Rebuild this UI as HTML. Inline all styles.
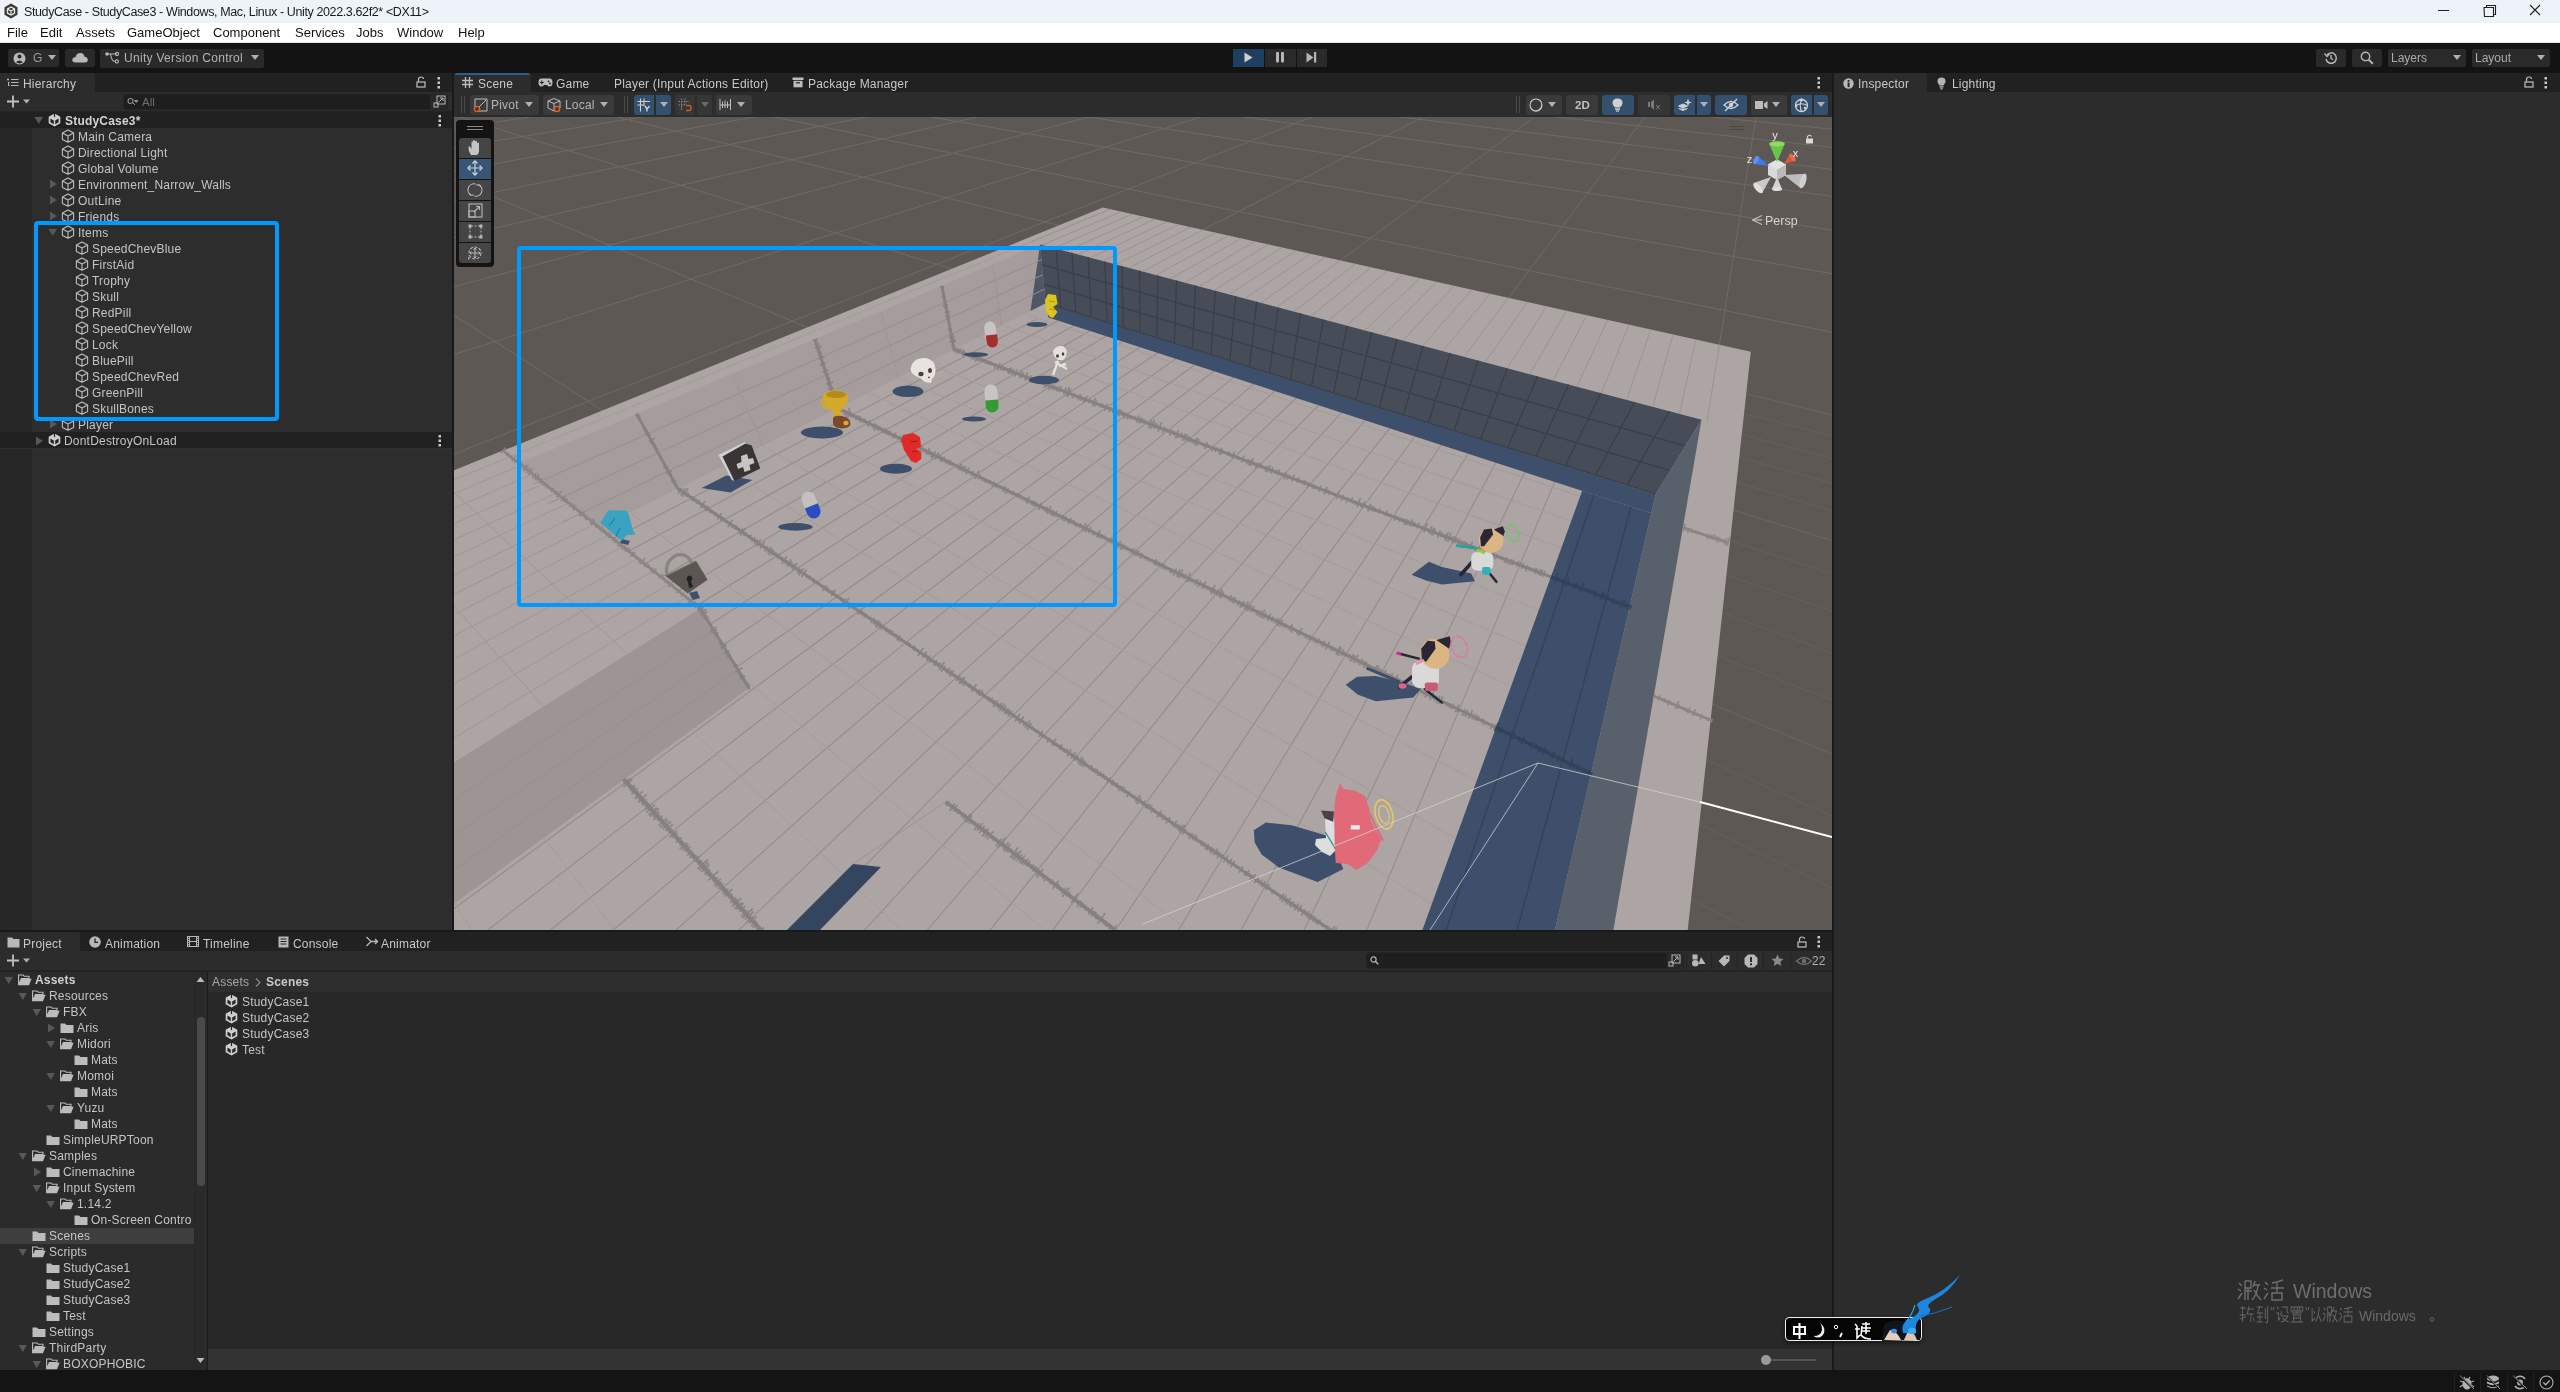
<!DOCTYPE html>
<html><head><meta charset="utf-8">
<style>
html,body{margin:0;padding:0;width:2560px;height:1392px;overflow:hidden;background:#191919;font-family:"Liberation Sans",sans-serif;}
.a{position:absolute;}
.t{position:absolute;font-size:12px;color:#c4c4c4;white-space:nowrap;line-height:16px;will-change:transform;}
svg{position:absolute;overflow:visible;}
</style></head><body>
<!-- title bar -->
<div class="a" style="left:0;top:0;width:2560px;height:23px;background:#eef2f9"></div>
<svg style="left:3px;top:3px" width="16" height="16" viewBox="0 0 16 16"><path d="M8 0.5 L14.5 4.2 V11.8 L8 15.5 L1.5 11.8 V4.2Z" fill="#3a3a3a"/><path d="M8 4 L11.5 6 V10 L8 12 L4.5 10 V6Z" fill="none" stroke="#e8e8e8" stroke-width="1.3"/><path d="M8 8 V12 M8 8 L4.5 6 M8 8 L11.5 6" stroke="#e8e8e8" stroke-width="1.1"/></svg>
<div class="t" id="title" style="left:24px;top:4px;color:#1a1a1a;font-size:12.5px;letter-spacing:-0.38px">StudyCase - StudyCase3 - Windows, Mac, Linux - Unity 2022.3.62f2* &lt;DX11&gt;</div>
<svg style="left:2436px;top:4px" width="110" height="14"><path d="M2 6.5 H13" stroke="#222" stroke-width="1"/><path d="M48 3.5 H57.5 V12.5 H48.5 Z M50.5 3.5 V1.5 H59.5 V10.5 H57.5" fill="none" stroke="#222" stroke-width="1.1"/><path d="M94 1 L104 11 M104 1 L94 11" stroke="#222" stroke-width="1.1"/></svg>
<!-- menu bar -->
<div class="a" style="left:0;top:23px;width:2560px;height:19px;background:#ffffff"></div>
<div class="a" style="left:0;top:42px;width:2560px;height:1px;background:#e6e6e6"></div>
<div class="t" style="left:7px;top:25px;color:#111;font-size:13px">File</div>
<div class="t" style="left:40px;top:25px;color:#111;font-size:13px">Edit</div>
<div class="t" style="left:76px;top:25px;color:#111;font-size:13px">Assets</div>
<div class="t" style="left:127px;top:25px;color:#111;font-size:13px">GameObject</div>
<div class="t" style="left:213px;top:25px;color:#111;font-size:13px">Component</div>
<div class="t" style="left:295px;top:25px;color:#111;font-size:13px">Services</div>
<div class="t" style="left:356px;top:25px;color:#111;font-size:13px">Jobs</div>
<div class="t" style="left:397px;top:25px;color:#111;font-size:13px">Window</div>
<div class="t" style="left:458px;top:25px;color:#111;font-size:13px">Help</div>
<!-- main toolbar -->
<div class="a" style="left:0;top:43px;width:2560px;height:30px;background:#131313"></div>
<div class="a" style="left:8px;top:49px;width:51px;height:18px;background:#2a2a2a;border-radius:2px"></div>
<svg style="left:13px;top:52px" width="13" height="13" viewBox="0 0 13 13"><circle cx="6.5" cy="6.5" r="6" fill="#b8b8b8"/><circle cx="6.5" cy="4.6" r="2" fill="#2a2a2a"/><path d="M3 10.3 Q6.5 6.8 10 10.3 Q6.5 12.6 3 10.3Z" fill="#2a2a2a"/></svg>
<div class="t" style="left:33px;top:50px;color:#9a9a9a;font-size:12px">G</div>
<svg style="left:48px;top:55px" width="8" height="6"><path d="M0 0 H8 L4 5Z" fill="#b0b0b0"/></svg>
<div class="a" style="left:65px;top:49px;width:30px;height:18px;background:#2a2a2a;border-radius:2px"></div>
<svg style="left:72px;top:52px" width="16" height="11" viewBox="0 0 16 11"><path d="M3.5 10.5 Q0 10.5 0.3 7.5 Q0.8 5 3.5 5.2 Q4.5 1 8.3 1 Q12 1.2 12.6 4.8 Q15.8 5 15.8 8 Q15.6 10.5 12.8 10.5Z" fill="#b8b8b8"/></svg>
<div class="a" style="left:100px;top:49px;width:164px;height:19px;background:#2a2a2a;border-radius:2px"></div>
<svg style="left:105px;top:52px" width="15" height="12" viewBox="0 0 15 12"><circle cx="2" cy="2" r="1.8" fill="#b8b8b8"/><path d="M2 2 H12 M5.5 2 Q6.5 9.5 10 9.5" stroke="#b8b8b8" stroke-width="1.1" fill="none"/><circle cx="12" cy="2" r="1.6" fill="none" stroke="#b8b8b8" stroke-width="1.1"/><circle cx="11.8" cy="9.5" r="1.6" fill="none" stroke="#b8b8b8" stroke-width="1.1"/></svg>
<div class="t" id="uvc" style="left:124px;top:50px;color:#b4b4b4;font-size:12px;letter-spacing:0.3px">Unity Version Control</div>
<svg style="left:251px;top:55px" width="8" height="6"><path d="M0 0 H8 L4 5Z" fill="#b0b0b0"/></svg>
<!-- play -->
<div class="a" style="left:1233px;top:49px;width:31px;height:18px;background:#1f3f61"></div>
<svg style="left:1244px;top:52px" width="9" height="11"><path d="M0.5 0.5 L8.5 5.5 L0.5 10.5Z" fill="#cfcfcf"/></svg>
<div class="a" style="left:1265px;top:49px;width:31px;height:18px;background:#2a2a2a"></div>
<svg style="left:1276px;top:52px" width="9" height="11"><rect x="0" y="0" width="3" height="10.5" rx="1" fill="#b5b5b5"/><rect x="5" y="0" width="3" height="10.5" rx="1" fill="#b5b5b5"/></svg>
<div class="a" style="left:1297px;top:49px;width:30px;height:18px;background:#2a2a2a"></div>
<svg style="left:1306px;top:52px" width="12" height="11"><path d="M0.5 0.5 L7.5 5.5 L0.5 10.5Z" fill="#b5b5b5"/><rect x="8" y="0" width="2.2" height="10.5" fill="#b5b5b5"/></svg>
<!-- right toolbar -->
<div class="a" style="left:2316px;top:49px;width:30px;height:18px;background:#2a2a2a;border-radius:2px"></div>
<svg style="left:2324px;top:51px" width="14" height="14" viewBox="0 0 14 14"><path d="M2.6 4.5 A5.2 5.2 0 1 1 2 8" fill="none" stroke="#b5b5b5" stroke-width="1.5"/><path d="M0.5 2.5 L3 5.5 L5.5 3" fill="none" stroke="#b5b5b5" stroke-width="1.3"/><path d="M7 4 V7.2 L9 8.8" fill="none" stroke="#b5b5b5" stroke-width="1.4"/></svg>
<div class="a" style="left:2352px;top:49px;width:30px;height:18px;background:#2a2a2a;border-radius:2px"></div>
<svg style="left:2360px;top:51px" width="14" height="14" viewBox="0 0 14 14"><circle cx="5.5" cy="5.5" r="4.2" fill="none" stroke="#b5b5b5" stroke-width="1.4"/><path d="M8.6 8.6 L12.8 12.8" stroke="#b5b5b5" stroke-width="2"/></svg>
<div class="a" style="left:2388px;top:49px;width:78px;height:18px;background:#2a2a2a;border-radius:2px"></div>
<div class="t" style="left:2391px;top:50px;color:#aaaaaa;font-size:12px">Layers</div>
<svg style="left:2453px;top:55px" width="8" height="6"><path d="M0 0 H8 L4 5Z" fill="#b0b0b0"/></svg>
<div class="a" style="left:2472px;top:49px;width:78px;height:18px;background:#2a2a2a;border-radius:2px"></div>
<div class="t" style="left:2475px;top:50px;color:#aaaaaa;font-size:12px">Layout</div>
<svg style="left:2537px;top:55px" width="8" height="6"><path d="M0 0 H8 L4 5Z" fill="#b0b0b0"/></svg>
<!-- status bar -->
<div class="a" style="left:0;top:1370px;width:2560px;height:22px;background:#181818"></div>
<div class="a" style="left:0;top:73px;width:452px;height:857px;background:#2d2d2d"></div>
<div class="a" style="left:0;top:73px;width:452px;height:19px;background:#212121;border-radius:3px 3px 0 0"></div>
<div class="a" style="left:0;top:73px;width:95px;height:19px;background:#2c2c2c;border-radius:3px 3px 0 0"></div>
<svg style="left:7px;top:77px" width="12" height="11" viewBox="0 0 12 11"><path d="M1 1.5 V3.5 M0 2.5 H2 M4 2.5 H11.5 M4 5.5 H11.5 M4 8.5 H11.5 M1.5 5 V9 M1 5.5 H2.5 M1 8.5 H2.5" stroke="#b8b8b8" stroke-width="1"/></svg>
<div class="t" style="left:23px;top:76px;color:#c8c8c8;letter-spacing:0.2px">Hierarchy</div>
<svg style="left:416px;top:76px" width="10" height="12" viewBox="0 0 10 12"><path d="M2.5 5.5 V3.5 Q2.5 1 5 1 Q7.5 1 7.5 3" fill="none" stroke="#c0c0c0" stroke-width="1.2"/><rect x="1" y="6" width="8" height="5" fill="none" stroke="#c0c0c0" stroke-width="1.2"/></svg>
<svg style="left:437px;top:77px" width="4" height="12"><rect x="0.5" y="0" width="2.5" height="2.5" fill="#c8c8c8"/><rect x="0.5" y="4.5" width="2.5" height="2.5" fill="#c8c8c8"/><rect x="0.5" y="9" width="2.5" height="2.5" fill="#c8c8c8"/></svg>
<div class="a" style="left:0;top:92px;width:452px;height:20px;background:#2c2c2c"></div>
<div class="a" style="left:0;top:111px;width:452px;height:1px;background:#232323"></div>
<svg style="left:7px;top:95px" width="24" height="13" viewBox="0 0 24 13"><path d="M6 0.5 V12.5 M0 6.5 H12" stroke="#c0c0c0" stroke-width="1.8"/><path d="M16 4.5 H23 L19.5 8.5Z" fill="#b0b0b0"/></svg>
<div class="a" style="left:123px;top:94px;width:325px;height:16px;background:#1e1e1e;border-radius:4px;border:1px solid #242424;box-sizing:border-box"></div>
<div class="a" style="left:430px;top:95px;width:17px;height:14px;background:#292929;border-radius:0 3px 3px 0"></div>
<svg style="left:127px;top:97px" width="12" height="10" viewBox="0 0 12 10"><circle cx="3.5" cy="4" r="2.5" fill="none" stroke="#909090" stroke-width="1.1"/><path d="M5.5 5.5 L8 8 M7.5 3.5 H11 L9.2 5.5Z" stroke="#909090" stroke-width="1" fill="#909090"/></svg>
<div class="t" style="left:142px;top:94px;color:#6e6e6e;font-size:11.5px">All</div>
<svg style="left:433px;top:95px" width="13" height="13" viewBox="0 0 13 13"><rect x="4" y="1" width="8" height="8" fill="none" stroke="#b8b8b8" stroke-width="1"/><rect x="1" y="8" width="4" height="4" fill="none" stroke="#b8b8b8" stroke-width="1"/><path d="M5.5 7.5 L10 3 M7 3 H10 V6" fill="none" stroke="#b8b8b8" stroke-width="1"/></svg>
<div class="a" style="left:0;top:128px;width:32px;height:802px;background:#272727"></div>
<div class="a" style="left:0;top:112px;width:452px;height:16px;background:#212121"></div>
<div class="a" style="left:0;top:432px;width:452px;height:16px;background:#212121"></div>
<div class="a" style="left:0;top:448px;width:452px;height:1px;background:#303030"></div>
<svg style="left:34px;top:116px" width="10" height="9"><path d="M0.5 1 H9 L4.75 8Z" fill="#585858"/></svg>
<svg style="left:48px;top:113px" width="13" height="14" viewBox="0 0 13 14"><path d="M6.5 0.5 L12.3 3.8 V10.2 L6.5 13.5 L0.7 10.2 V3.8Z" fill="#cfcfcf"/><path d="M2.4 5.6 L5.8 7.5 V11.2 L2.4 9.3Z M10.6 5.6 L7.2 7.5 V11.2 L10.6 9.3Z" fill="#212121"/><rect x="5.9" y="0" width="1.2" height="4.2" fill="#212121"/><path d="M6.5 7.2 L9.5 5.9 V8.8 L6.5 10.5Z" fill="#cfcfcf" opacity="0"/></svg>
<div class="t" style="left:65px;top:113px;color:#d2d2d2;font-weight:bold;letter-spacing:0.2px">StudyCase3*</div>
<svg style="left:438px;top:115px" width="4" height="12"><rect x="0.5" y="0" width="2.5" height="2.5" fill="#c8c8c8"/><rect x="0.5" y="4.5" width="2.5" height="2.5" fill="#c8c8c8"/><rect x="0.5" y="9" width="2.5" height="2.5" fill="#c8c8c8"/></svg>
<svg style="left:61px;top:129px" width="14" height="14" viewBox="0 0 14 14"><path d="M7 1 L12.6 4 V10.4 L7 13.3 L1.4 10.4 V4Z M1.4 4 L7 7 L12.6 4 M7 7 V13.3" fill="none" stroke="#bdbdbd" stroke-width="1.1" stroke-linejoin="round"/></svg>
<div class="t" style="left:78px;top:129px;color:#c4c4c4;letter-spacing:0.2px">Main Camera</div>
<svg style="left:61px;top:145px" width="14" height="14" viewBox="0 0 14 14"><path d="M7 1 L12.6 4 V10.4 L7 13.3 L1.4 10.4 V4Z M1.4 4 L7 7 L12.6 4 M7 7 V13.3" fill="none" stroke="#bdbdbd" stroke-width="1.1" stroke-linejoin="round"/></svg>
<div class="t" style="left:78px;top:145px;color:#c4c4c4;letter-spacing:0.2px">Directional Light</div>
<svg style="left:61px;top:161px" width="14" height="14" viewBox="0 0 14 14"><path d="M7 1 L12.6 4 V10.4 L7 13.3 L1.4 10.4 V4Z M1.4 4 L7 7 L12.6 4 M7 7 V13.3" fill="none" stroke="#bdbdbd" stroke-width="1.1" stroke-linejoin="round"/></svg>
<div class="t" style="left:78px;top:161px;color:#c4c4c4;letter-spacing:0.2px">Global Volume</div>
<svg style="left:49px;top:179px" width="9" height="10"><path d="M1 0.5 V9.5 L8 5Z" fill="#585858"/></svg>
<svg style="left:61px;top:177px" width="14" height="14" viewBox="0 0 14 14"><path d="M7 1 L12.6 4 V10.4 L7 13.3 L1.4 10.4 V4Z M1.4 4 L7 7 L12.6 4 M7 7 V13.3" fill="none" stroke="#bdbdbd" stroke-width="1.1" stroke-linejoin="round"/></svg>
<div class="t" style="left:78px;top:177px;color:#c4c4c4;letter-spacing:0.2px">Environment_Narrow_Walls</div>
<svg style="left:49px;top:195px" width="9" height="10"><path d="M1 0.5 V9.5 L8 5Z" fill="#585858"/></svg>
<svg style="left:61px;top:193px" width="14" height="14" viewBox="0 0 14 14"><path d="M7 1 L12.6 4 V10.4 L7 13.3 L1.4 10.4 V4Z M1.4 4 L7 7 L12.6 4 M7 7 V13.3" fill="none" stroke="#bdbdbd" stroke-width="1.1" stroke-linejoin="round"/></svg>
<div class="t" style="left:78px;top:193px;color:#c4c4c4;letter-spacing:0.2px">OutLine</div>
<svg style="left:49px;top:211px" width="9" height="10"><path d="M1 0.5 V9.5 L8 5Z" fill="#585858"/></svg>
<svg style="left:61px;top:209px" width="14" height="14" viewBox="0 0 14 14"><path d="M7 1 L12.6 4 V10.4 L7 13.3 L1.4 10.4 V4Z M1.4 4 L7 7 L12.6 4 M7 7 V13.3" fill="none" stroke="#bdbdbd" stroke-width="1.1" stroke-linejoin="round"/></svg>
<div class="t" style="left:78px;top:209px;color:#c4c4c4;letter-spacing:0.2px">Friends</div>
<svg style="left:48px;top:228px" width="10" height="9"><path d="M0.5 1 H9 L4.75 8Z" fill="#585858"/></svg>
<svg style="left:61px;top:225px" width="14" height="14" viewBox="0 0 14 14"><path d="M7 1 L12.6 4 V10.4 L7 13.3 L1.4 10.4 V4Z M1.4 4 L7 7 L12.6 4 M7 7 V13.3" fill="none" stroke="#bdbdbd" stroke-width="1.1" stroke-linejoin="round"/></svg>
<div class="t" style="left:78px;top:225px;color:#c4c4c4;letter-spacing:0.2px">Items</div>
<svg style="left:75px;top:241px" width="14" height="14" viewBox="0 0 14 14"><path d="M7 1 L12.6 4 V10.4 L7 13.3 L1.4 10.4 V4Z M1.4 4 L7 7 L12.6 4 M7 7 V13.3" fill="none" stroke="#bdbdbd" stroke-width="1.1" stroke-linejoin="round"/></svg>
<div class="t" style="left:92px;top:241px;color:#c4c4c4;letter-spacing:0.2px">SpeedChevBlue</div>
<svg style="left:75px;top:257px" width="14" height="14" viewBox="0 0 14 14"><path d="M7 1 L12.6 4 V10.4 L7 13.3 L1.4 10.4 V4Z M1.4 4 L7 7 L12.6 4 M7 7 V13.3" fill="none" stroke="#bdbdbd" stroke-width="1.1" stroke-linejoin="round"/></svg>
<div class="t" style="left:92px;top:257px;color:#c4c4c4;letter-spacing:0.2px">FirstAid</div>
<svg style="left:75px;top:273px" width="14" height="14" viewBox="0 0 14 14"><path d="M7 1 L12.6 4 V10.4 L7 13.3 L1.4 10.4 V4Z M1.4 4 L7 7 L12.6 4 M7 7 V13.3" fill="none" stroke="#bdbdbd" stroke-width="1.1" stroke-linejoin="round"/></svg>
<div class="t" style="left:92px;top:273px;color:#c4c4c4;letter-spacing:0.2px">Trophy</div>
<svg style="left:75px;top:289px" width="14" height="14" viewBox="0 0 14 14"><path d="M7 1 L12.6 4 V10.4 L7 13.3 L1.4 10.4 V4Z M1.4 4 L7 7 L12.6 4 M7 7 V13.3" fill="none" stroke="#bdbdbd" stroke-width="1.1" stroke-linejoin="round"/></svg>
<div class="t" style="left:92px;top:289px;color:#c4c4c4;letter-spacing:0.2px">Skull</div>
<svg style="left:75px;top:305px" width="14" height="14" viewBox="0 0 14 14"><path d="M7 1 L12.6 4 V10.4 L7 13.3 L1.4 10.4 V4Z M1.4 4 L7 7 L12.6 4 M7 7 V13.3" fill="none" stroke="#bdbdbd" stroke-width="1.1" stroke-linejoin="round"/></svg>
<div class="t" style="left:92px;top:305px;color:#c4c4c4;letter-spacing:0.2px">RedPill</div>
<svg style="left:75px;top:321px" width="14" height="14" viewBox="0 0 14 14"><path d="M7 1 L12.6 4 V10.4 L7 13.3 L1.4 10.4 V4Z M1.4 4 L7 7 L12.6 4 M7 7 V13.3" fill="none" stroke="#bdbdbd" stroke-width="1.1" stroke-linejoin="round"/></svg>
<div class="t" style="left:92px;top:321px;color:#c4c4c4;letter-spacing:0.2px">SpeedChevYellow</div>
<svg style="left:75px;top:337px" width="14" height="14" viewBox="0 0 14 14"><path d="M7 1 L12.6 4 V10.4 L7 13.3 L1.4 10.4 V4Z M1.4 4 L7 7 L12.6 4 M7 7 V13.3" fill="none" stroke="#bdbdbd" stroke-width="1.1" stroke-linejoin="round"/></svg>
<div class="t" style="left:92px;top:337px;color:#c4c4c4;letter-spacing:0.2px">Lock</div>
<svg style="left:75px;top:353px" width="14" height="14" viewBox="0 0 14 14"><path d="M7 1 L12.6 4 V10.4 L7 13.3 L1.4 10.4 V4Z M1.4 4 L7 7 L12.6 4 M7 7 V13.3" fill="none" stroke="#bdbdbd" stroke-width="1.1" stroke-linejoin="round"/></svg>
<div class="t" style="left:92px;top:353px;color:#c4c4c4;letter-spacing:0.2px">BluePill</div>
<svg style="left:75px;top:369px" width="14" height="14" viewBox="0 0 14 14"><path d="M7 1 L12.6 4 V10.4 L7 13.3 L1.4 10.4 V4Z M1.4 4 L7 7 L12.6 4 M7 7 V13.3" fill="none" stroke="#bdbdbd" stroke-width="1.1" stroke-linejoin="round"/></svg>
<div class="t" style="left:92px;top:369px;color:#c4c4c4;letter-spacing:0.2px">SpeedChevRed</div>
<svg style="left:75px;top:385px" width="14" height="14" viewBox="0 0 14 14"><path d="M7 1 L12.6 4 V10.4 L7 13.3 L1.4 10.4 V4Z M1.4 4 L7 7 L12.6 4 M7 7 V13.3" fill="none" stroke="#bdbdbd" stroke-width="1.1" stroke-linejoin="round"/></svg>
<div class="t" style="left:92px;top:385px;color:#c4c4c4;letter-spacing:0.2px">GreenPill</div>
<svg style="left:75px;top:401px" width="14" height="14" viewBox="0 0 14 14"><path d="M7 1 L12.6 4 V10.4 L7 13.3 L1.4 10.4 V4Z M1.4 4 L7 7 L12.6 4 M7 7 V13.3" fill="none" stroke="#bdbdbd" stroke-width="1.1" stroke-linejoin="round"/></svg>
<div class="t" style="left:92px;top:401px;color:#c4c4c4;letter-spacing:0.2px">SkullBones</div>
<svg style="left:49px;top:419px" width="9" height="10"><path d="M1 0.5 V9.5 L8 5Z" fill="#585858"/></svg>
<svg style="left:61px;top:417px" width="14" height="14" viewBox="0 0 14 14"><path d="M7 1 L12.6 4 V10.4 L7 13.3 L1.4 10.4 V4Z M1.4 4 L7 7 L12.6 4 M7 7 V13.3" fill="none" stroke="#bdbdbd" stroke-width="1.1" stroke-linejoin="round"/></svg>
<div class="t" style="left:78px;top:417px;color:#c4c4c4;letter-spacing:0.2px">Player</div>
<svg style="left:35px;top:436px" width="9" height="10"><path d="M1 0.5 V9.5 L8 5Z" fill="#585858"/></svg>
<svg style="left:48px;top:433px" width="13" height="14" viewBox="0 0 13 14"><path d="M6.5 0.5 L12.3 3.8 V10.2 L6.5 13.5 L0.7 10.2 V3.8Z" fill="#cfcfcf"/><path d="M2.4 5.6 L5.8 7.5 V11.2 L2.4 9.3Z M10.6 5.6 L7.2 7.5 V11.2 L10.6 9.3Z" fill="#212121"/><rect x="5.9" y="0" width="1.2" height="4.2" fill="#212121"/><path d="M6.5 7.2 L9.5 5.9 V8.8 L6.5 10.5Z" fill="#cfcfcf" opacity="0"/></svg>
<div class="t" style="left:64px;top:433px;color:#c4c4c4;letter-spacing:0.2px">DontDestroyOnLoad</div>
<svg style="left:438px;top:435px" width="4" height="12"><rect x="0.5" y="0" width="2.5" height="2.5" fill="#c8c8c8"/><rect x="0.5" y="4.5" width="2.5" height="2.5" fill="#c8c8c8"/><rect x="0.5" y="9" width="2.5" height="2.5" fill="#c8c8c8"/></svg>
<div class="a" style="left:34px;top:221px;width:245px;height:200px;border:4px solid #0099ff;border-radius:4px;box-sizing:border-box"></div>
<div class="a" style="left:454px;top:73px;width:1378px;height:857px;background:#2a2a2a"></div>
<div class="a" style="left:454px;top:73px;width:1378px;height:19px;background:#212121;border-radius:3px 3px 0 0"></div>
<div class="a" style="left:454px;top:73px;width:77px;height:19px;background:#2c2c2c;border-radius:3px 3px 0 0"></div>
<div class="a" style="left:455px;top:73px;width:75px;height:2px;background:#2c5d8f;border-radius:2px 2px 0 0"></div>
<svg style="left:462px;top:77px" width="11" height="11" viewBox="0 0 11 11"><path d="M3.5 0 V11 M7.5 0 V11 M0 3.5 H11 M0 7.5 H11" stroke="#bdbdbd" stroke-width="1.3"/></svg>
<div class="t" style="left:478px;top:76px;color:#c8c8c8;letter-spacing:0.2px">Scene</div>
<svg style="left:538px;top:78px" width="15" height="9" viewBox="0 0 15 9"><path d="M3.5 0.5 H11.5 Q14.5 0.5 14.5 4.5 Q14.5 8.5 11.5 8.5 Q10 8.5 9 7 H6 Q5 8.5 3.5 8.5 Q0.5 8.5 0.5 4.5 Q0.5 0.5 3.5 0.5Z" fill="#bdbdbd"/><path d="M3.8 2.6 V6.4 M1.9 4.5 H5.7" stroke="#212121" stroke-width="1.1"/><circle cx="10.5" cy="3.3" r="0.9" fill="#212121"/><circle cx="12" cy="5.5" r="0.9" fill="#212121"/></svg>
<div class="t" style="left:556px;top:76px;color:#c8c8c8;letter-spacing:0.2px">Game</div>
<div class="t" style="left:614px;top:76px;color:#c8c8c8;letter-spacing:0.2px">Player (Input Actions Editor)</div>
<svg style="left:792px;top:77px" width="12" height="11" viewBox="0 0 12 11"><rect x="0.5" y="0.5" width="11" height="2.5" fill="#bdbdbd"/><rect x="1.5" y="3.8" width="9" height="6.5" fill="#bdbdbd"/><rect x="4" y="5.2" width="4" height="1.2" fill="#212121"/></svg>
<div class="t" style="left:808px;top:76px;color:#c8c8c8;letter-spacing:0.2px">Package Manager</div>
<svg style="left:1817px;top:77px" width="4" height="12"><rect x="0.5" y="0" width="2.5" height="2.5" fill="#c8c8c8"/><rect x="0.5" y="4.5" width="2.5" height="2.5" fill="#c8c8c8"/><rect x="0.5" y="9" width="2.5" height="2.5" fill="#c8c8c8"/></svg>
<!-- scene toolbar -->
<div class="a" style="left:454px;top:92px;width:1378px;height:25px;background:#2c2c2c"></div>
<div class="a" style="left:461px;top:96px;width:1px;height:17px;background:#4a4a4a"></div>
<div class="a" style="left:464px;top:96px;width:1px;height:17px;background:#4a4a4a"></div>
<div class="a" style="left:470px;top:95px;width:69px;height:20px;background:#3a3a3a;border-radius:3px"></div>
<svg style="left:473px;top:97px" width="16" height="16" viewBox="0 0 16 16"><path d="M2 2 H14 V14 H5 M2 2 V10" fill="none" stroke="#bdbdbd" stroke-width="1"/><path d="M6 10 L13 3" stroke="#bdbdbd" stroke-width="1"/><circle cx="4" cy="12" r="2.6" fill="none" stroke="#e8602c" stroke-width="1.3"/></svg>
<div class="t" style="left:491px;top:97px;color:#b4b4b4;letter-spacing:0.2px">Pivot</div>
<svg style="left:525px;top:102px" width="8" height="6"><path d="M0 0 H8 L4 5Z" fill="#b0b0b0"/></svg>
<div class="a" style="left:543px;top:95px;width:71px;height:20px;background:#3a3a3a;border-radius:3px"></div>
<svg style="left:546px;top:97px" width="16" height="16" viewBox="0 0 16 16"><path d="M8 1.5 L14 4 V11 L8 14 L2 11 V4Z M2 4 L8 6.5 L14 4 M8 6.5 V14" fill="none" stroke="#bdbdbd" stroke-width="1"/><circle cx="11" cy="12" r="2.6" fill="#3a3a3a" stroke="#e8602c" stroke-width="1.3"/></svg>
<div class="t" style="left:565px;top:97px;color:#b4b4b4;letter-spacing:0.2px">Local</div>
<svg style="left:600px;top:102px" width="8" height="6"><path d="M0 0 H8 L4 5Z" fill="#b0b0b0"/></svg>
<div class="a" style="left:624px;top:96px;width:1px;height:17px;background:#4a4a4a"></div>
<div class="a" style="left:627px;top:96px;width:1px;height:17px;background:#4a4a4a"></div>
<div class="a" style="left:634px;top:95px;width:20px;height:20px;background:#34506f;border-radius:3px 0 0 3px"></div>
<div class="a" style="left:656px;top:95px;width:15px;height:20px;background:#34506f;border-radius:0 3px 3px 0"></div>
<svg style="left:637px;top:98px" width="14" height="14" viewBox="0 0 14 14"><path d="M3.5 0.5 V13.5 M7 0.5 V8 M0.5 3.5 H13 M0.5 7 H7" stroke="#d0d0d0" stroke-width="1.1"/><path d="M8 8 L10 11 L12.5 8 M10 11 V13.5" fill="none" stroke="#d0d0d0" stroke-width="1.4"/></svg>
<svg style="left:660px;top:102px" width="8" height="6"><path d="M0 0 H8 L4 5Z" fill="#b0b0b0"/></svg>
<div class="a" style="left:675px;top:95px;width:20px;height:20px;background:#363636;border-radius:3px 0 0 3px"></div>
<div class="a" style="left:697px;top:95px;width:15px;height:20px;background:#363636;border-radius:0 3px 3px 0"></div>
<svg style="left:678px;top:98px" width="14" height="14" viewBox="0 0 14 14"><path d="M3.5 0.5 V13 M7 0.5 V7 M0.5 3.5 H11 M0.5 7 H7" stroke="#8a8a8a" stroke-width="1" stroke-dasharray="1.5 1"/><path d="M8 7.5 H11 Q13 7.5 13 10 Q13 12.5 11 12.5 H8" fill="none" stroke="#d0582a" stroke-width="1.4"/></svg>
<svg style="left:701px;top:102px" width="8" height="6"><path d="M0 0 H8 L4 5Z" fill="#6a6a6a"/></svg>
<div class="a" style="left:716px;top:95px;width:36px;height:20px;background:#3a3a3a;border-radius:3px"></div>
<svg style="left:719px;top:98px" width="13" height="13" viewBox="0 0 13 13"><path d="M1 1 V12 M11.5 1 V12 M1 7 H11.5 M3.5 3.5 V10 M6 2.5 V10 M8.5 3.5 V10" stroke="#c0c0c0" stroke-width="1"/></svg>
<svg style="left:737px;top:102px" width="8" height="6"><path d="M0 0 H8 L4 5Z" fill="#b0b0b0"/></svg>
<!-- right side of scene toolbar -->
<div class="a" style="left:1516px;top:96px;width:1px;height:17px;background:#4a4a4a"></div>
<div class="a" style="left:1519px;top:96px;width:1px;height:17px;background:#4a4a4a"></div>
<div class="a" style="left:1526px;top:95px;width:36px;height:20px;background:#3a3a3a;border-radius:3px"></div>
<svg style="left:1529px;top:98px" width="14" height="14" viewBox="0 0 14 14"><circle cx="7" cy="7" r="6" fill="none" stroke="#c8c8c8" stroke-width="1.1"/><path d="M12.5 5 A6 6 0 0 1 4 12.5 A7 7 0 0 0 12.5 5Z" fill="#c8c8c8"/></svg>
<svg style="left:1548px;top:102px" width="8" height="6"><path d="M0 0 H8 L4 5Z" fill="#b0b0b0"/></svg>
<div class="a" style="left:1566px;top:95px;width:32px;height:20px;background:#3a3a3a;border-radius:3px"></div>
<div class="t" style="left:1575px;top:97px;color:#c0c0c0;font-weight:bold;font-size:11.5px">2D</div>
<div class="a" style="left:1602px;top:95px;width:32px;height:20px;background:#34506f;border-radius:3px"></div>
<svg style="left:1612px;top:98px" width="11" height="14" viewBox="0 0 11 14"><path d="M5.5 0.5 Q10.5 0.5 10.5 5 Q10.5 7.5 8 9.5 H3 Q0.5 7.5 0.5 5 Q0.5 0.5 5.5 0.5Z" fill="#d0d0d0"/><rect x="3" y="10.3" width="5" height="1.5" fill="#d0d0d0"/><rect x="4" y="12.3" width="3" height="1.3" fill="#d0d0d0"/></svg>
<div class="a" style="left:1638px;top:95px;width:32px;height:20px;background:#363636;border-radius:3px"></div>
<svg style="left:1648px;top:99px" width="13" height="12" viewBox="0 0 13 12"><rect x="0" y="3" width="2" height="5" fill="#7a7a7a"/><path d="M3 3 L6 0.5 V11 L3 8Z" fill="#7a7a7a"/><path d="M8 6 L12 10.5 M12 6 L8 10.5" stroke="#7a7a7a" stroke-width="1"/></svg>
<div class="a" style="left:1674px;top:95px;width:21px;height:20px;background:#34506f;border-radius:3px 0 0 3px"></div>
<div class="a" style="left:1697px;top:95px;width:14px;height:20px;background:#34506f;border-radius:0 3px 3px 0"></div>
<svg style="left:1678px;top:98px" width="14" height="14" viewBox="0 0 14 14"><path d="M0.5 8 L5 6 L9.5 8 L5 10Z M0.5 10.5 L5 12.5 L9.5 10.5" fill="#d0d0d0" stroke="#d0d0d0" stroke-width="1"/><path d="M10 0.5 L11 3.5 L13.8 4.5 L11 5.5 L10 8.5 L9 5.5 L6.2 4.5 L9 3.5Z" fill="#d0d0d0"/></svg>
<svg style="left:1700px;top:102px" width="8" height="6"><path d="M0 0 H8 L4 5Z" fill="#b0b0b0"/></svg>
<div class="a" style="left:1715px;top:95px;width:32px;height:20px;background:#34506f;border-radius:3px"></div>
<svg style="left:1723px;top:98px" width="16" height="14" viewBox="0 0 16 14"><path d="M1 7 Q8 0 15 7 Q8 14 1 7Z" fill="none" stroke="#d0d0d0" stroke-width="1.2"/><circle cx="8" cy="7" r="2.2" fill="#d0d0d0"/><path d="M2 13 L14 1" stroke="#d0d0d0" stroke-width="1.4"/></svg>
<div class="a" style="left:1751px;top:95px;width:36px;height:20px;background:#3a3a3a;border-radius:3px"></div>
<svg style="left:1755px;top:100px" width="13" height="10" viewBox="0 0 13 10"><rect x="0" y="1" width="8" height="8" fill="#bdbdbd"/><path d="M9 3.5 L12.5 1 V9 L9 6.5Z" fill="#bdbdbd"/></svg>
<svg style="left:1772px;top:102px" width="8" height="6"><path d="M0 0 H8 L4 5Z" fill="#b0b0b0"/></svg>
<div class="a" style="left:1791px;top:95px;width:21px;height:20px;background:#34506f;border-radius:3px 0 0 3px"></div>
<div class="a" style="left:1814px;top:95px;width:14px;height:20px;background:#34506f;border-radius:0 3px 3px 0"></div>
<svg style="left:1794px;top:98px" width="15" height="15" viewBox="0 0 15 15"><circle cx="7.5" cy="7.5" r="6" fill="none" stroke="#d0d0d0" stroke-width="1.3"/><path d="M1.5 7.5 Q7.5 4 13.5 7.5 M7.5 1.5 Q5 7.5 7.5 13.5" fill="none" stroke="#d0d0d0" stroke-width="1.1"/><circle cx="7.5" cy="1.8" r="1.6" fill="#d0d0d0"/><circle cx="2.2" cy="8" r="1.3" fill="#d0d0d0"/><circle cx="11" cy="10" r="1.3" fill="#d0d0d0"/></svg>
<svg style="left:1817px;top:102px" width="8" height="6"><path d="M0 0 H8 L4 5Z" fill="#b0b0b0"/></svg>
<svg style="left:454px;top:117px" width="1378" height="813" viewBox="454 117 1378 813">
<defs><clipPath id="vp"><rect x="454" y="117" width="1378" height="813"/></clipPath></defs>
<g clip-path="url(#vp)">
<rect x="454" y="117" width="1378" height="813" fill="#5d5854"/>
<path d="M1584.2 -62.8L-1591.3 40.6M1587.8 -62.8L-1643.1 44.6M1591.4 -62.7L-1698.8 48.9M1595.0 -62.7L-1758.9 53.6M1598.7 -62.7L-1823.7 58.6M1602.4 -62.7L-1894.0 64.1M1606.0 -62.7L-1970.5 70.0M1609.7 -62.6L-2054.0 76.4M1613.4 -62.6L-2145.5 83.5M1617.2 -62.6L-2246.3 91.3M1620.9 -62.6L-2357.7 100.0M1624.7 -62.6L-2481.7 109.6M1628.4 -62.6L-2620.4 120.3M1632.2 -62.5L-2776.7 132.4M1636.0 -62.5L-2954.1 146.2M1639.8 -62.5L-3157.2 161.9M1643.7 -62.5L-3391.9 180.1M1647.5 -62.5L-3666.5 201.4M1651.4 -62.4L-3991.8 226.6M1655.3 -62.4L-4383.4 256.9M1659.2 -62.4L-4864.0 294.1M1663.1 -62.4L-5467.6 340.9M1667.1 -62.4L-6248.4 401.4M1671.0 -62.4L-7298.1 482.7M1675.0 -62.3L-8784.1 597.8M1679.0 -62.3L-11050.0 773.4M1683.0 -62.3L-14928.5 1073.8M1687.0 -62.3L-23091.3 1706.2M1691.1 -62.3L-51396.8 3899.1M1695.1 -62.2L-66366.5 5258.1M1699.2 -62.2L-61050.0 5087.6M1703.3 -62.2L-68412.7 5994.1M1707.4 -62.2L-62319.7 5774.1M1711.5 -62.2L-56659.4 5569.7M1715.7 -62.1L-51387.3 5379.3M1719.9 -62.1L-46464.7 5201.5M1724.0 -62.1L-51382.3 6149.0M1728.3 -62.1L-45796.5 5918.4M1732.5 -62.1L-40615.7 5704.4M1736.7 -62.0L-35797.5 5505.4M1741.0 -62.0L-31305.0 5319.9M1745.3 -62.0L-27106.3 5146.5M1749.6 -62.0L-28532.9 6069.1M1753.9 -62.0L-23879.7 5844.9M1758.2 -61.9L-19559.0 5636.8M1762.6 -61.9L-15536.2 5443.0M1767.0 -61.9L-11781.6 5262.1M1771.4 -61.9L-10477.9 6226.8M1775.8 -61.8L-6405.6 5991.7M1780.3 -61.8L-2630.4 5773.8M1784.7 -61.8L879.1 5571.2M1789.2 -61.8L4150.0 5382.4M1793.7 -61.8L7205.8 5206.0M1798.2 -61.7L11856.6 6145.1M1802.8 -61.7L15033.1 5916.7M1807.4 -61.7L17981.5 5704.7M391.0 -63.0L2421.6 -32.8M386.4 -63.0L2431.7 -32.2M381.8 -63.0L2442.2 -31.6M377.1 -63.0L2453.0 -31.0M372.4 -63.0L2464.1 -30.4M367.7 -62.9L2475.6 -29.7M362.9 -62.9L2487.5 -29.0M358.1 -62.9L2499.9 -28.3M353.3 -62.9L2512.6 -27.6M348.4 -62.8L2525.9 -26.8M343.5 -62.8L2539.6 -26.0M338.6 -62.8L2553.9 -25.2M333.7 -62.8L2568.7 -24.3M328.7 -62.8L2584.1 -23.5M323.6 -62.7L2600.1 -22.5M318.6 -62.7L2616.7 -21.6M313.5 -62.7L2634.1 -20.6M308.3 -62.7L2652.2 -19.5M303.2 -62.6L2671.0 -18.5M298.0 -62.6L2690.8 -17.3M292.7 -62.6L2711.4 -16.1M287.4 -62.6L2733.0 -14.9M282.1 -62.5L2755.6 -13.6M276.8 -62.5L2779.3 -12.2M271.4 -62.5L2804.2 -10.8M265.9 -62.5L2830.4 -9.3M260.5 -62.4L2858.0 -7.7M255.0 -62.4L2887.1 -6.0M249.4 -62.4L2917.7 -4.3M243.8 -62.4L2950.2 -2.4M238.2 -62.3L2984.6 -0.4M232.5 -62.3L3021.0 1.7M226.8 -62.3L3059.8 3.9M221.0 -62.3L3101.0 6.3M215.2 -62.2L3145.0 8.8M209.4 -62.2L3192.1 11.5M203.5 -62.2L3242.5 14.4M197.6 -62.2L3296.7 17.5M191.6 -62.1L3355.1 20.9M185.6 -62.1L3418.2 24.5M179.5 -62.1L3486.6 28.4M173.4 -62.1L3560.9 32.7M167.2 -62.0L3642.0 37.4M161.0 -62.0L3730.9 42.5M154.8 -62.0L3828.8 48.1M148.5 -61.9L3937.0 54.3M142.1 -61.9L4057.3 61.2M135.7 -61.9L4191.9 69.0M129.3 -61.9L4343.5 77.7M122.8 -61.8L4515.4 87.6M116.2 -61.8L4712.1 98.9M109.6 -61.8L4939.3 111.9M103.0 -61.7L5204.8 127.2M96.3 -61.7L5519.1 145.2M89.5 -61.7L5897.1 167.0M82.7 -61.6L6360.2 193.6M75.8 -61.6L6940.9 227.0M68.9 -61.6L7690.4 270.1M61.9 -61.6L8695.1 327.8M54.8 -61.5L10111.7 409.2M47.7 -61.5L12259.2 532.7M40.6 -61.5L15899.3 741.9M33.4 -61.4L23417.9 1174.1M26.1 -61.4L48080.1 2591.6M18.7 -61.4L96664.0 5526.0M11.3 -61.3L101880.7 6120.0M3.9 -61.3L91928.5 5808.0M-3.6 -61.3L82918.4 5525.5M-11.2 -61.2L86673.9 6120.9M-18.9 -61.2L77456.2 5808.1M-26.6 -61.2L69113.0 5525.1M-34.4 -61.1L71393.8 6121.8M-42.2 -61.1L62917.6 5808.3M-50.2 -61.0L55247.2 5524.6M-58.2 -61.0L56039.8 6122.7M-66.2 -61.0L48312.1 5808.4M-74.3 -60.9L41320.8 5524.1M-82.5 -60.9L40611.3 6123.7M-90.8 -60.9L33639.5 5808.6M-99.2 -60.8L27333.4 5523.6M-107.6 -60.8L25107.8 6124.6M-116.1 -60.7L18899.1 5808.8M-124.7 -60.7L13284.5 5523.1M-133.3 -60.7L9528.9 6125.5M-142.0 -60.6L4090.5 5808.9M-150.9 -60.6L-826.3 5522.7M-159.8 -60.5L-6126.2 6126.5M-168.7 -60.5L-10786.8 5809.1M-177.8 -60.5L-14999.4 5522.2M-186.9 -60.4L-21857.9 6127.4M-196.2 -60.4L-25733.2 5809.2M-205.5 -60.3L-29235.2 5521.7" stroke="#6f6a66" stroke-width="1" fill="none"/>
<path d="M1846.3 373.0L1995.8 1468.1M1991.8 405.3L2658.9 1943.9M1739.2 392.2L2207.0 507.0M1737.2 411.6L2229.2 537.4M1735.1 432.6L2253.9 571.2M1732.8 455.5L2281.5 609.0M1730.2 480.6L2312.6 651.6M1727.4 508.3L2347.9 699.8M1724.3 538.9L2388.2 755.0M1720.9 572.9L2434.7 818.7M1717.0 610.9L2489.0 893.0M1712.7 653.8L2553.3 981.0M1707.8 702.4L2630.4 1086.6M1702.1 757.9L2724.9 1215.8M1695.6 822.2L2843.1 1377.6M1688.0 897.2L2995.3 1586.0M1679.0 986.0L3198.8 1864.5M1668.2 1092.8L3484.6 2255.7M1655.0 1223.6L3915.3 2845.3" stroke="#66615c" stroke-width="1" fill="none"/>
<polygon points="1102.8,207.6 1750.8,351.7 1143.9,5917.1 6.6,651.9" fill="#aca5a3" />
<polygon points="1045.6,303.3 1655.6,494.4 1029.2,3204.2 147.8,755.3" fill="#aca5a3" />
<path d="M1036.1 319.5L155.4 776.3M1058.2 320.8L164.0 800.2M1073.7 325.8L173.1 825.5M1089.6 331.0L182.7 852.3M1105.9 336.3L193.0 880.8M1122.7 341.7L203.9 911.1M1139.9 347.3L215.5 943.4M1157.6 353.0L227.9 977.9M1175.7 358.9L241.2 1014.8M1194.4 365.0L255.5 1054.4M1213.6 371.2L270.8 1097.0M1233.4 377.6L287.3 1142.9M1253.7 384.2L305.2 1192.6M1274.7 391.0L324.6 1246.6M1296.3 398.0L345.8 1305.3M1318.6 405.3L368.9 1369.6M1341.5 412.7L394.3 1440.1M1365.2 420.4L422.3 1517.9M1389.6 428.3L453.3 1604.2M1414.9 436.5L487.9 1700.3M1441.0 445.0L526.8 1808.2M1468.0 453.8L570.6 1930.0M1495.9 462.8L620.5 2068.8M1524.8 472.2L677.9 2228.2M1554.7 481.9L744.5 2413.3M1585.7 492.0L822.8 2630.7M1617.9 502.4L916.1 2889.9" stroke="#938c8a" stroke-width="1.1" fill="none"/>
<path d="M1045.6 303.3L1655.6 494.4M1024.6 313.9L1649.9 519.0M1002.3 325.2L1643.7 545.8M978.7 337.1L1636.9 575.2M953.5 349.7L1629.5 607.5M926.8 363.1L1621.2 643.3M898.3 377.5L1612.0 683.0M867.9 392.8L1601.8 727.4M835.3 409.2L1590.2 777.4M800.3 426.8L1577.1 834.0M762.6 445.8L1562.1 898.8M721.9 466.3L1544.8 973.7M677.9 488.5L1524.6 1061.0M630.1 512.5L1500.7 1164.3M577.9 538.8L1472.0 1288.4M520.8 567.5L1436.9 1440.3M458.0 599.1L1393.0 1630.4M388.7 634.0L1336.4 1875.3M311.8 672.8L1260.7 2202.7M225.9 716.0L1154.4 2662.5" stroke="#a39c9a" stroke-width="1" fill="none"/>
<polygon points="1045.6,303.3 1655.6,494.4 1651.3,513.2 1048.5,317.6" fill="#3e4f6b" />
<polygon points="1582.2,490.8 1651.3,513.2 1029.2,3204.2 813.2,2604.2" fill="#3e4f6b" />
<path d="M1594.1 494.7L845.8 2694.7M1631.0 506.6L958.2 3007.0" stroke="#344459" stroke-width="1.5" fill="none"/>
<polygon points="1040.1,244.4 519.1,463.5 574.5,540.5 1045.6,303.3" fill="#a49d9b" />
<polygon points="1040.1,244.4 1030.5,311.0 1045.6,303.3" fill="#4e5765" />
<polygon points="1040.1,244.4 1701.5,419.7 1655.6,494.4 1045.6,303.3" fill="#464c58" />
<path d="M1669.4 411.2L1626.8 485.4M1634.5 402.0L1595.4 475.6M1600.9 393.1L1565.1 466.1M1568.5 384.5L1535.9 456.9M1537.4 376.2L1507.6 448.1M1507.3 368.3L1480.3 439.5M1478.3 360.6L1453.8 431.2M1450.3 353.1L1428.2 423.2M1423.2 346.0L1403.4 415.4M1397.0 339.0L1379.3 407.9M1371.7 332.3L1356.0 400.6M1347.2 325.8L1333.4 393.5M1323.5 319.5L1311.5 386.6M1300.6 313.4L1290.2 380.0M1278.3 307.5L1269.5 373.5M1256.7 301.8L1249.4 367.2M1235.7 296.2L1229.9 361.1M1215.4 290.9L1210.9 355.1M1195.6 285.6L1192.4 349.3M1176.5 280.5L1174.4 343.7M1157.8 275.6L1156.9 338.2M1139.7 270.8L1139.8 332.9M1122.1 266.1L1123.2 327.7M1104.9 261.6L1107.0 322.6M1088.2 257.1L1091.2 317.6M1071.9 252.8L1075.8 312.8M1056.1 248.6L1060.8 308.1M1042.0 264.6L1685.4 445.9M1043.8 284.2L1670.2 470.6M1045.6 303.0L1655.9 494.0" stroke="#393e48" stroke-width="1.2" fill="none"/>
<polygon points="1701.5,419.7 926.2,4909.5 1029.2,3204.2 1655.6,494.4" fill="#58606b" />
<polygon points="700.4,608.4 80.7,995.2 253.8,1049.8 749.1,688.0" fill="#9c9593" />
<polygon points="503.1,450.6 700.4,608.4 80.7,995.2 6.6,651.9" fill="#aca5a3" />
<path d="M1041.5 259.7L534.0 484.1M1042.9 274.7L548.1 503.8M1044.3 289.2L561.6 522.6M713.6 630.1L130.0 1010.7M726.2 650.5L174.9 1024.9M738.0 669.8L216.0 1037.8" stroke="#968f8d" stroke-width="1" fill="none"/>
<path d="M992.9 264.2L1001.5 325.6M880.9 311.3L898.0 377.7M732.2 373.9L763.0 445.6" stroke="#9c9593" stroke-width="1" fill="none"/>
<path d="M1110.3 209.2L510.5 456.6" stroke="#a39c9a" stroke-width="1"/>
<path d="M437.7 477.1L627.2 654.0M365.3 506.5L543.5 706.3M284.7 539.1L446.7 766.7M194.5 575.7L333.6 837.3M92.6 617.0L199.6 920.9M-23.1 663.9L38.4 1021.6M-155.9 717.7L-159.3 1145.0M-309.7 780.1L-407.4 1299.9M-489.9 853.1L-728.1 1500.1M-704.0 939.9L-1158.6 1768.8M-962.6 1044.7L-1767.0 2148.7M510.5 456.6L9.0 663.3M521.3 465.2L12.7 680.2M532.6 474.2L16.5 698.0M544.2 483.5L20.6 716.6M556.2 493.1L24.8 736.1M568.6 503.0L29.2 756.6M581.5 513.3L33.9 778.2M594.8 524.0L38.8 801.0M608.7 535.1L44.0 825.0M623.0 546.5L49.4 850.3M638.0 558.5L55.2 877.2M653.5 570.9L61.4 905.6M669.6 583.8L67.9 935.8M686.4 597.2L74.8 967.9" stroke="#9e9795" stroke-width="1" fill="none"/>
<path d="M945.8 801.9 L853 864" stroke="#9a9391" stroke-width="1"/>
<path d="M1110.3 209.2L1031.0 241.9M1121.2 211.7L1042.4 245.0M1132.3 214.1L1054.0 248.1M1143.6 216.6L1065.9 251.2M1155.1 219.2L1078.0 254.4M1166.8 221.8L1090.4 257.7M1178.7 224.4L1103.0 261.0M1190.8 227.1L1115.8 264.5M1203.1 229.9L1129.0 267.9M1215.7 232.7L1142.4 271.5M1228.5 235.5L1156.1 275.1M1241.6 238.4L1170.1 278.8M1254.8 241.4L1184.4 282.6M1268.4 244.4L1199.0 286.5M1282.2 247.5L1213.9 290.5M1296.3 250.6L1229.1 294.5M1310.7 253.8L1244.8 298.6M1325.3 257.1L1260.7 302.9M1340.3 260.4L1277.0 307.2M1355.6 263.8L1293.8 311.6M1371.1 267.3L1310.9 316.2M1387.1 270.8L1328.4 320.8M1403.3 274.4L1346.3 325.6M1419.9 278.1L1364.7 330.5M1436.8 281.9L1383.6 335.4M1454.1 285.7L1402.9 340.6M1471.8 289.7L1422.7 345.8M1489.9 293.7L1443.0 351.2M1508.4 297.8L1463.9 356.7M1527.4 302.0L1485.3 362.4M1546.7 306.3L1507.3 368.3M1566.5 310.7L1529.9 374.2M1586.8 315.2L1553.1 380.4M1607.6 319.9L1577.0 386.7M1628.9 324.6L1601.5 393.2M1650.7 329.4L1626.8 399.9M1673.0 334.4L1652.7 406.8M1695.9 339.5L1679.5 413.9M1719.4 344.7L1707.1 421.2" stroke="#9a9391" stroke-width="1" fill="none"/>
<path d="M954.1 349.4L1550.9 576.8" stroke="#878080" stroke-width="2.99"/>
<path d="M954.0 352.2L955.8 347.6M956.4 353.3L958.3 348.4M958.6 353.7L960.7 348.2M961.7 355.0L963.8 349.4M962.7 356.9L964.8 351.3M965.8 355.7L966.7 353.3M968.4 356.6L969.3 354.3M970.8 358.6L972.9 352.8M972.6 359.9L974.9 353.7M975.3 361.9L978.3 353.9M977.9 360.9L979.6 356.7M980.5 361.9L982.2 357.4M983.0 362.4L984.5 358.5M985.2 364.0L986.8 359.7M988.2 365.0L989.7 361.0M990.4 365.1L991.7 361.6M993.7 365.6L994.5 363.5M994.4 368.5L996.3 363.5M997.5 370.2L1000.2 363.1M1000.3 370.6L1002.6 364.5M1002.7 370.6L1004.1 366.9M1004.7 371.0L1006.1 367.1M1007.6 373.4L1009.6 368.0M1009.1 374.1L1011.6 367.4M1011.7 374.6L1013.7 369.3M1014.5 376.6L1017.2 369.4M1017.3 375.2L1018.2 372.6M1019.2 378.3L1022.2 370.6M1021.6 378.0L1023.6 372.6M1024.6 380.3L1027.6 372.4M1026.6 380.3L1028.4 375.7M1029.2 381.6L1031.5 375.3M1032.4 381.1L1033.9 377.1M1035.0 381.6L1035.7 379.8M1037.0 384.1L1039.1 378.7M1039.0 384.0L1040.7 379.6M1042.4 384.9L1043.5 382.0M1044.0 388.1L1046.9 380.2M1046.4 387.3L1048.3 382.3M1048.5 389.6L1050.7 383.7M1050.7 389.5L1052.5 384.8M1053.2 390.5L1055.1 385.7M1056.4 391.5L1058.5 385.9M1059.0 392.3L1061.4 385.9M1062.1 391.8L1062.7 390.0M1063.6 394.4L1066.2 387.6M1066.0 396.1L1069.3 387.3M1067.8 396.8L1070.8 388.8M1071.6 395.5L1072.4 393.4M1072.2 398.3L1074.3 392.9M1076.0 398.5L1077.3 394.9M1078.2 400.4L1080.7 393.9M1080.8 400.8L1082.5 396.4M1083.1 402.4L1085.1 397.3M1084.6 402.3L1087.1 395.9M1088.6 402.8L1090.2 398.5M1090.5 403.3L1091.7 400.1M1092.3 406.4L1095.6 397.9M1094.7 406.5L1096.9 400.6M1097.7 405.2L1098.3 403.5M1100.1 407.5L1101.7 403.2M1102.3 407.7L1103.6 404.2M1104.5 411.1L1107.3 403.8M1107.3 409.2L1108.1 406.9M1108.9 412.1L1110.9 406.9M1112.4 413.1L1114.5 407.6M1114.7 413.3L1116.7 408.1M1117.1 415.4L1119.5 409.0M1118.9 416.2L1121.3 409.8M1121.7 415.9L1123.4 411.4M1123.7 418.4L1125.9 412.6M1126.5 419.5L1128.8 413.3M1129.1 418.7L1130.4 415.2M1131.0 419.5L1132.5 415.7M1134.1 419.9L1135.5 416.1M1136.4 422.7L1139.1 415.5M1139.1 423.5L1141.3 417.5M1140.9 423.3L1142.9 418.0M1143.7 423.7L1145.2 419.5M1146.8 424.7L1148.0 421.6M1148.6 428.1L1151.5 420.4M1150.9 428.7L1154.4 419.7M1153.6 428.2L1155.8 422.4M1155.8 428.8L1157.7 423.7M1158.0 431.7L1161.6 422.4M1161.2 429.6L1162.0 427.6M1162.4 433.2L1164.9 426.5M1166.2 432.3L1167.6 428.5M1168.0 432.3L1168.9 430.1M1169.7 435.7L1172.1 429.5M1173.4 435.3L1175.0 431.1M1175.3 438.2L1178.3 430.3M1177.2 438.1L1179.0 433.2M1180.0 438.2L1182.1 432.6M1182.5 440.8L1185.2 433.6M1184.7 440.7L1187.3 433.9M1187.4 442.0L1189.6 436.3M1189.5 442.5L1191.3 438.0M1192.0 443.4L1193.7 439.0M1194.5 445.1L1197.4 437.5M1196.4 445.7L1199.0 438.9M1200.3 444.6L1201.3 442.0M1202.4 446.3L1203.7 443.0M1204.4 449.3L1207.2 442.0M1207.1 447.6L1208.3 444.3M1210.2 448.8L1211.4 445.9M1211.8 451.3L1213.7 446.3M1214.8 451.9L1216.6 447.3M1216.7 451.1L1218.0 447.6M1219.1 454.9L1221.8 447.6M1221.1 454.3L1222.9 449.7M1224.1 453.7L1224.9 451.8M1227.2 455.5L1228.7 451.5M1228.9 456.2L1230.3 452.5M1232.0 458.3L1234.5 451.7M1233.7 457.8L1234.9 454.6M1236.1 459.1L1237.5 455.6M1238.7 460.0L1239.9 457.0M1241.3 462.7L1244.1 455.5M1244.6 461.2L1245.4 459.1M1246.4 464.4L1248.4 459.0M1248.7 465.4L1250.7 460.0M1250.2 466.1L1253.2 458.4M1253.2 465.1L1254.5 461.9M1255.3 468.4L1257.5 462.6M1257.6 468.2L1259.7 462.7M1260.5 468.4L1262.1 464.4M1263.5 468.6L1264.5 466.0M1265.2 471.9L1267.5 466.0M1267.5 472.5L1270.2 465.3M1270.7 473.4L1273.0 467.2M1273.0 472.6L1274.0 470.1M1275.1 474.0L1276.8 469.6M1277.5 475.3L1279.7 469.5M1280.2 475.7L1281.3 472.9M1282.9 477.1L1284.6 472.7M1284.0 479.5L1286.5 473.0M1286.9 479.6L1288.9 474.5M1290.4 479.2L1291.2 476.9M1291.6 481.5L1294.1 474.8M1295.6 480.9L1296.6 478.1M1296.8 482.7L1298.9 477.2M1299.8 482.9L1300.9 480.1M1302.9 484.4L1304.5 480.1M1304.5 485.3L1306.1 480.9M1307.2 487.7L1309.4 482.0M1309.6 486.1L1310.3 484.1M1312.1 488.7L1313.8 484.0M1314.6 489.0L1315.8 485.7M1317.4 488.9L1318.2 487.0M1318.7 491.8L1321.0 485.8M1322.6 491.0L1323.5 488.8M1324.1 494.5L1327.1 486.7M1326.6 493.1L1328.1 489.3M1328.8 495.0L1330.5 490.6M1331.3 494.7L1332.2 492.4M1333.7 496.0L1334.8 493.2M1336.2 498.9L1339.2 491.1M1338.5 497.7L1339.6 494.9M1341.2 500.7L1343.5 494.8M1343.6 499.5L1344.7 496.8M1345.9 502.7L1347.9 497.2M1349.1 501.2L1349.9 499.2M1350.5 503.0L1352.6 497.4M1352.8 503.6L1354.1 500.3M1355.2 504.9L1356.6 501.1M1357.1 507.2L1360.6 497.9M1360.6 507.1L1362.0 503.2M1362.1 508.7L1364.9 501.4M1366.1 508.0L1367.1 505.6M1367.7 511.4L1370.6 503.7M1370.4 510.8L1372.6 505.3M1372.9 511.8L1374.7 506.9M1375.3 512.2L1376.6 508.9M1378.2 513.3L1380.0 508.6M1380.1 513.2L1381.0 510.9M1383.3 514.2L1384.2 512.0M1385.1 516.3L1387.2 510.7M1387.8 515.8L1388.7 513.3M1389.7 517.3L1391.0 513.8M1392.6 517.7L1393.5 515.3M1394.1 520.7L1396.1 515.4M1397.5 519.6L1398.5 516.9M1399.0 521.7L1400.6 517.4M1402.5 522.6L1404.0 518.6M1404.3 525.2L1406.7 518.9M1406.6 525.1L1408.6 520.0M1409.4 526.3L1412.0 519.4M1412.0 526.5L1413.9 521.4M1413.9 526.5L1415.4 522.6M1417.0 528.6L1419.2 522.8M1419.8 528.0L1420.5 526.3M1421.7 530.8L1423.4 526.4M1423.8 532.5L1427.2 523.4M1426.7 531.1L1427.7 528.2M1428.9 533.9L1431.9 526.1M1431.2 535.0L1434.0 527.6M1432.7 535.5L1435.4 528.5M1436.9 535.2L1437.9 532.5M1437.7 537.6L1440.4 530.4M1440.6 537.1L1442.4 532.3M1444.1 538.4L1445.9 533.8M1445.0 541.0L1448.5 531.9M1447.6 541.9L1451.1 532.7M1451.1 541.1L1452.9 536.4M1452.5 543.4L1455.2 536.4M1455.1 543.1L1457.3 537.5M1457.3 545.6L1460.0 538.6M1460.3 546.3L1462.5 540.7M1462.9 547.1L1465.2 541.0M1465.4 546.7L1467.0 542.4M1468.1 547.6L1469.6 543.8M1469.4 549.5L1472.5 541.6M1472.7 548.7L1473.9 545.5M1474.9 551.1L1476.6 546.6M1477.6 551.9L1480.1 545.3M1480.1 552.4L1482.0 547.3M1482.9 553.4L1484.5 549.2M1485.3 554.7L1486.9 550.8M1487.0 554.1L1488.0 551.4M1489.5 556.0L1491.5 550.9M1492.6 556.5L1494.1 552.5M1494.8 559.1L1496.8 554.0M1496.9 558.4L1498.3 554.8M1500.1 559.0L1501.1 556.3M1501.9 560.3L1503.2 556.9M1504.5 563.0L1506.7 557.0M1506.7 563.7L1508.6 558.7M1509.0 564.9L1511.2 559.2M1511.7 565.2L1513.9 559.5M1514.6 564.0L1515.4 561.8M1516.9 566.5L1519.0 560.9M1519.3 566.9L1520.9 562.7M1521.4 568.9L1523.6 563.2M1524.1 568.7L1525.2 565.8M1525.6 571.5L1528.0 565.1M1528.7 570.1L1529.9 567.0M1531.0 571.5L1532.4 567.7M1534.1 572.8L1536.0 567.7M1535.3 573.9L1537.4 568.5M1538.5 574.8L1540.8 569.0M1540.3 576.0L1542.7 569.9M1543.1 576.7L1545.3 570.9M1546.8 576.4L1547.5 574.7M1548.6 577.8L1549.7 574.8M1550.6 580.1L1552.7 574.5" stroke="#878080" stroke-width="1.8" opacity="0.85"/>
<path d="M1550.9 576.8L1629.6 606.8" stroke="#33425a" stroke-width="2.99"/>
<path d="M1550.8 580.0L1553.2 573.8M1553.1 579.3L1554.1 576.6M1554.6 582.7L1558.2 573.1M1558.1 581.6L1559.6 577.7M1560.3 581.9L1561.2 579.4M1562.4 584.9L1564.9 578.2M1565.4 586.7L1568.9 577.5M1567.4 585.3L1569.1 581.0M1570.8 586.0L1571.8 583.4M1573.0 588.7L1575.3 582.6M1574.9 589.2L1577.0 583.5M1578.0 588.3L1578.7 586.5M1579.9 592.4L1583.7 582.6M1583.7 590.3L1584.3 588.6M1585.2 591.0L1585.8 589.4M1588.1 593.2L1589.9 588.6M1590.4 593.6L1591.4 590.8M1592.0 594.9L1593.9 590.1M1594.0 597.8L1597.0 590.0M1597.5 596.6L1598.8 593.2M1600.0 599.5L1603.0 591.5M1601.9 599.6L1604.5 592.6M1604.4 599.4L1606.2 594.6M1606.5 601.1L1608.8 595.2M1609.6 600.5L1610.5 598.1M1611.5 604.0L1613.7 598.1M1613.8 604.3L1615.6 599.5M1616.3 604.8L1618.0 600.3M1619.3 607.3L1622.0 600.0M1621.9 607.8L1624.8 600.1M1625.1 606.5L1626.2 603.7M1626.6 610.0L1629.0 603.8M1630.0 609.0L1631.5 605.1" stroke="#33425a" stroke-width="1.8" opacity="0.85"/>
<path d="M941.9 285.7L954.1 349.4" stroke="#878080" stroke-width="2.76"/>
<path d="M940.4 287.3L944.0 286.6M941.5 289.5L943.7 289.0M941.8 291.5L944.4 291.0M941.7 294.3L945.3 293.6M941.3 297.7L946.1 296.8M942.8 300.5L945.7 299.9M943.1 302.1L946.5 301.4M942.6 305.8L947.9 304.8M943.9 308.2L947.9 307.4M945.5 310.7L948.2 310.2M944.7 312.8L950.1 311.7M945.2 316.1L950.0 315.2M946.3 318.6L949.8 317.9M947.2 321.5L949.7 321.1M948.3 324.3L950.2 323.9M948.8 326.2L950.7 325.8M947.8 329.3L951.5 328.6M948.7 331.2L952.0 330.6M949.5 334.6L953.6 333.8M949.1 337.5L954.7 336.4M950.1 340.2L955.0 339.3M949.6 342.2L956.1 341.0M951.3 345.2L954.6 344.5M951.7 347.9L955.2 347.3M952.7 350.2L956.0 349.6" stroke="#878080" stroke-width="1.8" opacity="0.85"/>
<path d="M837.6 408.1L1496.0 727.6" stroke="#878080" stroke-width="2.99"/>
<path d="M837.1 409.8L838.5 406.9M839.8 410.6L840.8 408.5M842.1 411.5L843.2 409.2M844.0 414.7L846.1 410.3M845.6 416.7L849.9 407.9M847.8 417.3L850.9 411.0M851.0 417.4L853.0 413.4M853.8 417.2L855.0 414.9M855.8 420.1L858.1 415.2M858.5 420.3L860.5 416.1M859.9 422.6L862.1 418.0M863.0 422.4L864.8 418.7M865.8 423.0L867.0 420.6M867.3 426.5L870.4 420.3M870.0 425.0L870.8 423.5M872.5 428.2L875.0 423.0M874.0 430.5L877.0 424.4M877.2 430.6L879.6 425.7M879.6 430.5L881.3 427.1M881.7 433.0L884.0 428.3M884.0 433.7L886.5 428.4M886.6 434.4L888.3 430.8M888.2 435.2L890.6 430.4M891.5 436.3L892.8 433.7M893.1 438.5L895.9 432.7M896.5 437.8L897.4 435.8M898.5 439.7L900.4 435.8M900.0 442.7L902.6 437.4M901.9 442.7L905.2 436.0M905.1 442.7L906.6 439.5M907.4 443.4L908.4 441.5M910.3 445.4L911.7 442.3M911.8 446.2L913.5 442.7M914.3 448.3L916.5 443.6M915.9 450.6L920.2 441.8M919.1 450.6L922.0 444.7M921.2 450.9L923.0 447.3M924.2 452.3L926.0 448.7M926.4 454.6L929.5 448.2M928.4 454.6L930.4 450.5M930.9 457.1L933.2 452.3M931.9 458.5L935.4 451.4M935.1 459.6L938.6 452.3M938.7 459.1L940.6 455.2M940.4 461.6L942.7 456.9M942.4 461.6L944.8 456.6M944.7 462.7L946.5 459.1M946.7 464.2L948.9 459.7M949.0 465.0L951.2 460.5M952.0 465.8L953.4 462.7M955.1 466.8L956.4 464.1M956.7 467.3L957.7 465.2M958.4 470.0L961.4 463.8M960.9 470.8L963.4 465.7M963.0 472.1L966.0 466.0M965.7 474.4L969.0 467.7M968.7 473.0L969.6 471.1M971.2 475.7L973.6 470.7M973.2 475.3L974.2 473.2M974.8 479.2L978.9 470.7M978.1 479.0L980.3 474.4M980.8 479.1L981.7 477.1M982.2 480.7L983.9 477.3M985.1 482.5L986.8 479.0M987.7 482.3L988.8 480.1M989.3 484.0L990.9 480.6M991.9 486.8L994.5 481.4M994.8 486.8L996.7 482.8M996.0 487.7L997.7 484.1M998.8 488.2L1000.2 485.3M1002.0 489.1L1003.2 486.7M1003.0 491.8L1005.7 486.2M1005.6 493.9L1008.4 488.2M1008.8 493.2L1010.3 490.2M1011.2 494.7L1013.0 491.0M1013.0 494.9L1014.5 491.6M1015.9 496.7L1017.8 492.8M1017.6 497.3L1019.3 493.9M1020.2 498.4L1021.8 495.2M1022.6 499.4L1023.9 496.8M1025.3 501.1L1027.0 497.6M1026.5 503.5L1029.8 496.6M1029.5 503.1L1030.7 500.7M1031.7 505.4L1034.1 500.5M1033.7 506.3L1036.0 501.6M1036.0 506.5L1037.7 503.0M1038.2 510.0L1041.6 503.0M1041.9 509.1L1043.3 506.2M1043.8 509.9L1045.4 506.7M1045.1 512.3L1047.7 506.9M1047.2 514.0L1050.9 506.2M1050.3 515.0L1052.9 509.7M1052.1 516.2L1054.5 511.2M1054.2 516.7L1057.0 511.0M1057.4 517.3L1059.0 514.1M1059.9 517.9L1061.4 514.8M1061.6 519.7L1063.6 515.4M1063.7 521.4L1066.1 516.4M1067.4 521.7L1068.7 518.9M1068.5 523.7L1071.3 517.9M1072.2 524.1L1074.1 520.2M1074.3 524.4L1075.4 522.1M1075.4 526.5L1077.3 522.7M1079.3 527.4L1081.2 523.4M1080.9 527.7L1082.3 524.9M1082.1 531.2L1086.1 522.9M1084.8 532.2L1088.5 524.6M1088.3 532.7L1091.0 527.0M1090.6 532.2L1091.5 530.2M1092.6 535.1L1094.5 531.1M1095.1 534.5L1096.2 532.2M1096.8 537.5L1100.2 530.5M1099.9 538.3L1102.1 533.8M1102.8 538.4L1104.4 535.2M1104.6 538.9L1105.4 537.3M1107.3 541.3L1108.8 538.3M1109.5 542.2L1111.5 538.0M1111.2 542.9L1113.1 539.1M1114.4 544.0L1115.7 541.5M1116.0 545.8L1118.0 541.6M1117.4 548.0L1120.8 541.0M1120.1 549.9L1123.1 543.7M1122.9 549.3L1124.9 545.2M1126.3 550.0L1127.8 546.8M1128.0 550.4L1128.9 548.7M1130.2 552.6L1132.1 548.7M1132.2 553.9L1134.8 548.4M1134.3 555.8L1137.1 550.1M1136.6 555.8L1139.0 550.9M1139.6 558.1L1142.2 552.8M1141.6 557.3L1143.1 554.3M1144.1 558.2L1145.0 556.3M1146.7 560.5L1148.3 557.2M1149.2 560.9L1150.3 558.7M1151.3 561.8L1152.5 559.3M1154.0 564.3L1156.5 559.2M1155.3 564.9L1157.5 560.5M1157.7 566.0L1159.7 561.8M1160.3 567.1L1161.9 563.8M1162.4 568.6L1164.6 564.0M1164.6 569.6L1166.2 566.1M1167.6 570.1L1168.9 567.5M1169.9 573.2L1172.2 568.5M1172.1 572.3L1173.2 570.0M1173.2 575.6L1176.5 568.7M1176.5 576.9L1180.2 569.4M1178.5 578.0L1182.7 569.4M1181.4 577.2L1183.2 573.4M1183.8 578.6L1186.2 573.7M1186.0 581.8L1190.5 572.6M1188.3 581.8L1190.6 577.0M1190.9 581.7L1192.3 578.8M1193.5 582.5L1194.9 579.5M1195.2 584.7L1198.0 579.0M1197.8 586.8L1200.8 580.6M1200.9 585.7L1202.1 583.1M1202.0 589.1L1205.8 581.4M1205.4 588.5L1206.7 585.7M1207.5 589.7L1209.2 586.3M1210.1 591.6L1212.1 587.4M1210.9 593.8L1215.2 584.8M1213.6 594.1L1216.0 589.3M1216.1 595.6L1219.4 588.8M1218.5 596.8L1222.1 589.3M1220.1 598.5L1223.6 591.4M1224.3 597.1L1225.4 594.7M1226.3 598.2L1227.2 596.3M1228.5 600.7L1231.3 595.0M1231.3 601.7L1233.5 597.0M1232.9 603.4L1235.8 597.5M1236.2 602.8L1237.1 600.9M1237.4 605.3L1239.9 600.3M1239.9 607.7L1242.9 601.4M1242.1 607.2L1244.7 601.7M1244.4 609.6L1248.3 601.5M1246.6 611.0L1249.8 604.3M1249.1 610.9L1252.0 605.0M1251.4 612.2L1254.5 605.9M1254.3 611.7L1255.5 609.3M1256.1 615.3L1258.7 609.9M1258.6 616.4L1261.5 610.5M1260.6 618.0L1264.7 609.6M1263.1 618.7L1266.0 612.6M1265.7 618.1L1267.3 614.8M1267.4 620.4L1270.7 613.7M1270.9 621.0L1272.9 616.7M1272.7 621.4L1274.4 617.9M1275.2 623.3L1277.9 617.8M1276.8 625.7L1280.4 618.4M1279.3 626.6L1282.5 620.1M1282.3 626.6L1283.8 623.3M1284.3 627.8L1286.3 623.7M1287.9 628.4L1289.1 626.1M1289.3 630.3L1292.2 624.3M1290.8 632.5L1293.5 626.8M1294.1 630.8L1294.9 629.1M1296.8 634.0L1298.7 630.1M1298.4 635.7L1302.1 628.2M1301.7 634.5L1302.4 632.9M1304.0 636.1L1305.0 633.9M1305.4 638.4L1307.3 634.3M1308.2 639.6L1310.4 635.0M1310.4 640.6L1312.4 636.4M1313.1 641.1L1315.0 637.2M1314.7 642.6L1316.6 638.6M1317.0 643.4L1319.4 638.4M1320.5 644.5L1322.2 640.9M1322.0 647.0L1325.1 640.7M1325.4 646.5L1326.6 643.9M1325.8 649.4L1329.5 641.8M1329.8 649.2L1331.8 645.1M1331.4 650.9L1333.3 647.0M1333.8 651.0L1335.4 647.5M1336.1 654.4L1340.1 646.1M1337.5 655.3L1341.2 647.6M1340.4 655.7L1343.6 649.1M1343.2 655.9L1345.2 651.7M1346.4 656.7L1347.5 654.4M1348.0 658.1L1350.1 653.8M1350.1 661.5L1353.6 654.1M1352.4 660.8L1355.0 655.4M1354.1 663.0L1358.0 654.8M1357.6 662.9L1359.3 659.3M1359.1 665.2L1362.4 658.6M1362.2 665.3L1364.5 660.6M1363.7 668.0L1366.8 661.6M1366.6 667.0L1368.1 663.9M1369.8 668.1L1371.0 665.5M1372.5 669.0L1373.5 666.8M1373.8 672.1L1377.2 665.1M1375.6 673.2L1379.1 666.0M1378.5 673.5L1380.8 668.7M1380.6 674.0L1382.7 669.6M1382.5 677.0L1386.1 669.6M1385.6 675.7L1387.1 672.7M1388.0 678.5L1390.2 674.0M1389.6 679.5L1392.7 673.2M1393.2 679.8L1394.7 676.7M1394.3 682.3L1397.9 674.7M1396.6 682.1L1398.6 677.9M1399.1 683.2L1400.9 679.3M1401.2 685.3L1403.6 680.3M1403.6 686.3L1406.5 680.2M1406.1 687.5L1408.2 683.2M1408.4 688.7L1411.7 681.9M1411.4 689.0L1413.6 684.6M1414.6 689.3L1415.7 687.0M1416.3 691.3L1417.8 688.1M1417.1 694.0L1421.4 685.1M1420.6 692.5L1421.6 690.4M1423.5 694.7L1425.0 691.7M1424.9 697.6L1429.0 689.2M1428.5 696.1L1429.3 694.4M1429.7 699.8L1433.6 691.8M1432.9 698.7L1434.0 696.4M1434.3 700.6L1436.7 695.6M1436.4 703.1L1439.9 695.8M1439.3 703.9L1442.8 696.6M1442.1 702.9L1443.1 700.9M1444.8 703.9L1445.5 702.4M1446.8 706.2L1448.6 702.5M1449.0 707.5L1451.0 703.3M1451.3 708.9L1453.9 703.6M1453.7 708.7L1454.7 706.8M1455.2 712.2L1458.9 704.7M1457.5 712.0L1459.5 707.9M1461.1 712.1L1462.1 710.0M1462.4 715.8L1465.6 709.2M1464.8 716.7L1468.0 710.1M1467.4 715.4L1468.8 712.5M1468.5 718.7L1472.6 710.3M1472.0 719.4L1474.8 713.6M1474.7 720.1L1477.4 714.6M1477.0 720.8L1479.2 716.2M1479.4 721.0L1480.2 719.3M1481.3 722.4L1483.2 718.6M1483.3 724.5L1485.1 720.7M1486.5 725.0L1487.8 722.2M1489.0 725.4L1490.0 723.4M1490.1 729.1L1492.9 723.3M1493.6 729.1L1496.1 724.1M1496.4 729.2L1497.3 727.4" stroke="#878080" stroke-width="1.8" opacity="0.85"/>
<path d="M1496.0 727.6L1591.0 773.8" stroke="#33425a" stroke-width="2.99"/>
<path d="M1494.5 731.3L1498.5 723.0M1498.0 732.3L1500.3 727.5M1499.6 732.5L1502.2 727.2M1502.3 733.0L1503.9 729.6M1505.2 734.3L1506.8 731.1M1507.6 734.5L1508.5 732.6M1509.5 738.4L1513.1 731.0M1512.4 739.1L1515.5 732.8M1515.5 738.2L1516.4 736.4M1517.8 740.0L1519.5 736.4M1519.1 742.0L1521.2 737.5M1521.0 743.9L1524.5 736.8M1524.6 743.7L1526.3 740.3M1526.6 743.7L1527.7 741.5M1528.8 745.6L1530.6 741.9M1530.6 749.1L1534.0 742.2M1534.0 748.8L1536.6 743.5M1536.6 749.2L1538.3 745.6M1537.9 752.7L1541.3 745.8M1540.5 751.6L1542.1 748.3M1542.4 753.9L1545.5 747.5M1545.5 753.4L1547.2 749.8M1548.0 754.6L1549.2 752.1M1550.6 756.8L1552.9 752.0M1551.7 758.5L1555.2 751.3M1555.3 757.7L1556.0 756.1M1556.4 761.4L1559.3 755.6M1559.6 762.1L1562.5 756.2M1562.0 761.7L1564.0 757.6M1564.2 762.8L1565.5 760.1M1566.7 764.4L1568.4 760.9M1569.1 767.2L1573.1 758.9M1571.4 767.4L1573.4 763.3M1573.6 769.5L1576.1 764.3M1576.3 770.7L1579.3 764.4M1578.4 770.2L1580.1 766.8M1582.0 771.2L1583.2 768.7M1583.6 772.9L1585.7 768.7M1586.5 772.9L1587.4 771.0M1588.0 774.8L1590.2 770.1M1590.6 775.9L1592.3 772.3" stroke="#33425a" stroke-width="1.8" opacity="0.85"/>
<path d="M814.8 339.1L837.6 408.1" stroke="#878080" stroke-width="2.76"/>
<path d="M812.7 340.6L817.8 338.9M813.9 342.4L816.7 341.5M814.6 345.2L819.3 343.7M814.7 348.4L821.5 346.2M816.4 350.8L820.5 349.4M817.7 353.3L821.6 352.0M818.0 355.5L822.2 354.0M818.3 358.6L824.6 356.5M820.7 360.0L822.1 359.5M820.1 364.3L825.3 362.5M820.7 366.0L825.3 364.5M823.2 368.9L825.8 368.0M822.4 371.9L828.4 369.9M824.2 374.0L827.7 372.9M825.5 376.0L828.8 374.9M826.1 379.2L830.4 377.8M826.9 380.7L830.0 379.7M826.4 384.2L833.1 381.9M827.8 386.3L831.6 385.0M828.2 389.4L833.8 387.6M831.2 391.3L832.5 390.9M831.3 393.5L834.0 392.7M831.2 396.5L834.9 395.3M831.6 399.6L837.1 397.7M833.3 401.9L838.3 400.3M834.8 403.9L837.4 403.0M835.6 406.9L838.7 405.9M837.0 408.9L838.8 408.3" stroke="#878080" stroke-width="1.8" opacity="0.85"/>
<path d="M677.8 488.5L1404.2 979.9" stroke="#878080" stroke-width="2.99"/>
<path d="M677.8 489.8L679.0 488.0M678.0 493.5L681.9 487.9M680.7 495.2L685.5 488.1M682.4 496.8L688.0 488.6M685.7 496.8L688.6 492.5M687.9 497.1L689.5 494.7M691.0 499.2L692.8 496.5M692.0 500.9L694.6 497.1M694.5 501.5L696.3 498.8M696.8 504.0L699.4 500.1M699.3 504.6L701.0 502.2M700.3 508.0L704.9 501.3M703.6 508.4L705.8 505.1M704.9 510.8L708.2 505.8M706.8 511.6L709.6 507.5M709.5 513.3L712.1 509.5M712.3 513.3L713.3 511.8M714.3 515.4L716.4 512.3M716.0 516.5L717.5 514.2M717.3 519.4L721.6 513.2M720.3 520.7L723.0 516.7M722.3 520.6L724.2 517.8M724.4 522.5L726.2 519.8M727.4 523.7L729.0 521.4M727.7 527.1L732.5 520.0M731.3 527.4L733.6 524.0M733.6 528.8L736.2 524.9M735.1 529.8L737.6 526.2M737.4 530.4L739.2 527.8M739.6 534.1L743.3 528.6M740.5 535.4L745.3 528.3M743.5 536.2L746.3 532.1M746.7 536.5L747.8 534.8M748.5 538.8L751.2 534.8M751.0 540.5L752.8 537.8M751.8 542.1L755.4 536.9M754.1 544.4L757.7 539.2M756.0 546.5L760.8 539.3M758.7 545.7L760.5 543.0M759.9 548.7L764.8 541.5M763.3 548.3L764.9 546.0M764.5 551.4L768.1 546.1M767.4 552.7L771.3 547.0M768.5 554.9L772.7 548.7M770.9 555.5L774.2 550.6M774.1 555.8L776.4 552.4M776.6 558.2L779.9 553.4M778.5 558.9L780.6 555.9M780.7 560.4L782.9 557.1M781.6 563.9L786.8 556.3M784.8 564.3L787.8 559.9M786.8 566.2L791.3 559.6M788.8 566.6L792.0 561.9M791.2 567.9L794.1 563.6M792.4 570.1L797.0 563.3M796.2 570.6L798.3 567.4M797.3 573.4L800.5 568.7M798.7 575.4L803.5 568.3M801.6 576.9L806.6 569.4M804.7 576.1L806.5 573.5M806.4 577.8L808.3 575.0M808.3 579.3L810.6 575.8M811.7 580.8L813.5 578.1M813.0 582.8L815.0 579.9M815.4 582.8L816.8 580.8M817.0 584.7L818.9 581.9M820.2 586.3L821.3 584.6M821.5 588.2L823.5 585.3M822.5 591.0L826.3 585.3M825.6 591.1L828.1 587.3M828.0 592.7L829.9 590.0M830.5 594.3L833.1 590.4M831.2 596.1L835.6 589.7M834.2 596.4L835.9 593.9M836.1 598.3L838.3 594.9M839.2 599.6L840.9 597.1M840.6 601.3L842.7 598.2M842.5 603.1L845.7 598.4M843.8 606.0L849.0 598.2M847.9 605.4L849.8 602.6M848.5 608.8L852.4 603.1M851.9 608.8L854.2 605.3M854.0 609.9L856.0 606.9M857.0 611.2L858.0 609.7M857.5 614.6L861.5 608.7M860.4 614.8L862.9 611.1M862.3 615.2L864.1 612.5M863.9 617.6L866.6 613.5M866.8 617.9L868.2 615.8M869.7 619.8L871.3 617.5M870.9 622.8L874.3 617.8M873.1 624.2L876.3 619.4M875.0 626.0L878.8 620.4M876.1 627.6L880.3 621.4M878.9 627.9L881.9 623.3M880.9 629.6L884.3 624.7M884.5 630.7L886.8 627.2M886.0 631.5L887.9 628.7M887.9 633.2L890.4 629.6M890.0 635.1L893.0 630.6M892.8 635.7L894.6 633.1M895.0 637.4L897.2 634.1M896.8 640.4L900.1 635.4M899.0 641.5L901.6 637.7M901.4 641.1L902.4 639.5M904.5 643.1L905.5 641.8M905.7 645.1L908.0 641.6M907.7 646.3L910.1 642.7M909.9 647.6L911.6 645.0M912.4 649.3L914.8 645.8M913.7 651.1L915.8 647.9M916.9 651.6L918.1 649.7M917.8 655.9L923.2 648.0M921.5 654.8L922.8 652.8M922.3 657.9L926.7 651.4M925.1 657.6L927.1 654.6M926.4 661.0L930.1 655.4M929.1 662.5L932.0 658.2M932.3 662.4L933.9 660.0M933.2 665.6L936.9 660.1M935.3 665.4L937.5 662.1M937.6 666.9L940.6 662.5M939.0 670.0L944.4 661.9M941.2 671.7L945.1 666.0M945.2 670.9L946.8 668.5M946.4 673.4L950.0 668.1M949.0 674.6L951.8 670.4M949.6 676.5L953.7 670.6M953.8 676.8L955.2 674.9M956.0 678.4L957.8 675.7M956.5 681.0L960.4 675.3M958.8 683.5L962.8 677.6M960.4 684.1L965.1 677.1M962.7 686.0L966.3 680.7M966.4 685.9L968.1 683.5M968.3 687.6L970.8 683.9M970.8 689.2L973.0 686.0M971.5 691.7L976.5 684.3M975.4 691.3L976.6 689.5M976.7 693.9L979.9 689.2M978.7 696.0L982.7 690.0M980.7 695.8L983.1 692.1M983.1 697.5L985.2 694.3M985.7 699.5L987.6 696.6M987.9 700.9L990.3 697.3M989.7 702.2L992.7 697.7M992.3 703.8L994.7 700.2M993.1 706.9L997.4 700.6M996.1 706.7L998.9 702.6M997.8 709.0L1002.1 702.7M999.5 711.0L1004.4 703.8M1002.2 711.6L1006.2 705.7M1004.2 714.1L1008.2 708.2M1006.3 714.5L1009.8 709.3M1008.2 716.6L1012.2 710.7M1011.5 717.4L1014.0 713.6M1014.1 717.2L1015.0 715.9M1015.1 721.3L1020.2 713.7M1017.6 721.3L1019.7 718.2M1018.8 723.9L1024.0 716.2M1022.2 722.8L1023.8 720.6M1023.4 725.7L1026.2 721.6M1025.0 727.8L1029.9 720.6M1026.9 729.9L1031.6 722.9M1031.3 729.8L1033.4 726.6M1033.5 731.3L1035.3 728.7M1035.5 732.5L1037.4 729.7M1036.9 733.6L1039.1 730.4M1038.6 737.1L1042.7 731.1M1041.2 738.1L1043.9 734.1M1044.0 737.4L1045.4 735.4M1046.8 739.4L1047.9 737.8M1046.9 742.4L1049.9 738.0M1051.1 742.5L1052.4 740.5M1051.3 745.3L1056.0 738.4M1053.4 746.2L1056.0 742.4M1056.5 746.7L1058.1 744.3M1058.7 749.0L1061.9 744.3M1060.2 750.2L1062.6 746.7M1062.6 751.8L1064.8 748.5M1065.0 752.9L1067.8 748.7M1066.7 756.4L1071.4 749.5M1070.2 755.6L1072.0 752.9M1071.1 758.5L1075.6 751.9M1073.2 760.6L1077.2 754.7M1075.3 760.7L1078.3 756.2M1077.6 763.6L1082.3 756.8M1079.2 765.2L1083.5 758.8M1081.3 766.2L1085.1 760.5M1083.9 766.9L1086.7 762.8M1086.9 767.2L1088.3 765.2M1088.9 769.7L1092.1 764.9M1091.3 771.1L1093.4 767.9M1093.0 771.9L1095.3 768.4M1094.8 773.5L1097.7 769.1M1097.4 775.9L1100.3 771.7M1099.6 775.9L1101.6 772.9M1101.7 777.5L1104.1 773.9M1104.0 779.5L1106.3 776.0M1107.0 780.0L1108.3 778.0M1106.8 783.4L1110.7 777.7M1110.5 783.9L1113.2 779.8M1111.6 786.0L1114.6 781.5M1115.1 787.1L1117.8 783.0M1116.9 788.2L1118.9 785.2M1118.1 791.3L1121.5 786.1M1121.1 791.3L1124.3 786.5M1123.5 793.0L1125.8 789.7M1126.3 793.2L1127.5 791.4M1126.5 797.1L1130.2 791.6M1130.3 796.5L1131.8 794.3M1132.3 798.1L1133.8 795.8M1134.3 799.0L1135.9 796.6M1135.3 802.2L1140.2 795.1M1136.9 804.1L1141.5 797.4M1141.1 803.9L1142.9 801.2M1142.1 805.6L1145.5 800.6M1144.9 808.1L1147.6 804.1M1146.6 808.9L1150.1 803.8M1149.0 810.2L1152.4 805.2M1150.9 812.9L1154.1 808.3M1153.8 812.8L1156.0 809.5M1156.0 814.1L1157.5 811.8M1156.7 817.2L1161.2 810.6M1159.5 817.0L1162.3 813.0M1161.7 819.7L1165.0 814.9M1164.7 820.2L1166.9 817.0M1165.8 823.7L1170.2 817.2M1169.0 822.8L1170.6 820.5M1171.2 824.4L1173.2 821.4M1172.7 827.1L1177.0 820.8M1175.3 828.1L1178.1 824.0M1177.3 829.7L1180.4 825.0M1178.9 831.4L1183.3 824.8M1180.1 833.1L1185.6 825.0M1182.3 834.5L1186.0 829.1M1186.0 834.1L1187.3 832.2M1188.3 836.0L1190.3 833.0M1188.8 839.1L1192.6 833.3M1192.1 839.6L1195.8 834.2M1194.0 840.9L1197.3 836.1M1197.0 842.2L1198.8 839.4M1199.4 843.8L1201.7 840.3M1200.7 845.6L1203.5 841.4M1203.0 846.6L1205.9 842.5M1205.0 849.4L1208.6 844.0M1206.3 850.4L1209.4 845.9M1209.4 851.2L1212.2 847.0M1210.3 853.7L1213.9 848.3M1213.0 855.1L1217.3 848.7M1215.5 855.1L1218.5 850.8M1216.8 858.2L1220.6 852.6M1220.5 858.6L1223.4 854.3M1222.7 858.6L1224.0 856.5M1223.4 862.4L1228.2 855.3M1227.4 862.7L1229.1 860.1M1227.9 864.7L1232.0 858.5M1230.3 867.3L1234.6 861.0M1233.3 865.7L1234.6 863.7M1235.7 867.9L1237.3 865.6M1237.9 868.6L1239.3 866.6M1238.8 872.5L1243.0 866.3M1242.0 871.9L1243.2 870.1M1244.0 874.9L1246.6 871.1M1245.3 875.9L1249.2 870.3M1248.1 876.5L1250.3 873.2M1249.7 879.7L1253.0 874.9M1251.4 880.8L1255.9 874.1M1254.0 883.3L1259.0 875.9M1256.7 882.8L1259.3 879.0M1259.0 884.9L1262.5 879.6M1261.3 886.9L1265.4 880.9M1263.7 887.4L1266.2 883.8M1265.3 889.7L1269.3 883.7M1267.9 889.7L1270.1 886.5M1270.4 890.6L1271.3 889.2M1271.5 893.8L1274.2 889.9M1274.4 893.8L1276.3 891.0M1277.2 895.5L1278.5 893.6M1279.0 897.2L1280.6 894.9M1279.6 900.1L1284.0 893.6M1281.9 902.0L1286.6 895.0M1285.1 902.7L1287.9 898.5M1286.1 904.8L1290.9 897.8M1289.1 905.5L1291.8 901.5M1290.3 907.2L1293.9 901.8M1293.4 907.6L1295.9 903.9M1294.4 910.3L1299.0 903.5M1297.4 911.6L1301.7 905.3M1300.3 911.4L1302.1 908.7M1301.3 915.4L1305.3 909.5M1304.2 914.6L1306.5 911.2M1305.6 916.8L1309.6 910.9M1307.5 918.7L1311.0 913.5M1310.2 919.8L1313.4 915.1M1312.3 921.7L1315.7 916.6M1315.0 923.3L1318.0 918.9M1317.2 924.7L1320.7 919.6M1320.6 924.6L1321.8 922.8M1321.4 926.6L1323.6 923.4M1324.0 926.9L1325.4 924.8M1325.3 929.7L1328.1 925.5M1328.8 930.6L1330.8 927.7M1329.5 934.1L1334.9 926.1M1331.5 935.6L1336.9 927.6M1335.2 935.2L1337.2 932.3M1337.2 936.6L1338.8 934.2M1338.3 939.1L1341.4 934.6M1340.6 940.3L1343.9 935.4M1343.1 940.2L1344.9 937.6M1345.4 941.5L1346.7 939.6M1347.3 944.6L1350.0 940.6M1349.7 945.8L1352.6 941.5M1351.2 947.1L1353.6 943.6M1353.7 949.1L1357.0 944.3M1355.4 951.8L1359.4 945.9M1358.3 950.3L1359.4 948.8M1360.1 953.6L1363.8 948.3M1362.5 954.7L1364.7 951.4M1364.3 955.7L1366.7 952.1M1365.4 958.4L1370.0 951.6M1369.0 959.5L1372.0 955.1M1371.3 960.2L1373.3 957.2M1373.3 962.4L1376.0 958.3M1375.3 964.4L1379.1 958.8M1376.5 965.3L1381.2 958.5M1379.9 965.2L1381.3 963.0M1382.3 966.5L1383.6 964.6M1383.5 970.3L1387.0 965.0M1385.2 971.3L1389.6 964.9M1387.9 972.9L1391.6 967.5M1390.2 974.2L1394.4 968.0M1392.4 974.6L1395.2 970.4M1393.4 977.5L1398.8 969.4M1396.7 978.8L1399.9 974.1M1399.8 978.7L1401.8 975.8M1400.9 982.1L1405.6 975.1M1403.2 982.1L1406.1 978.0" stroke="#878080" stroke-width="1.8" opacity="0.85"/>
<path d="M1404.2 979.9L1524.6 1061.3" stroke="#33425a" stroke-width="2.99"/>
<path d="M1403.4 981.7L1406.0 977.9M1405.4 984.6L1409.5 978.6M1408.5 984.3L1410.1 981.9M1410.1 985.8L1412.1 982.8M1411.8 989.5L1415.5 984.0M1415.0 988.7L1416.3 986.9M1416.2 992.2L1419.4 987.6M1419.8 991.8L1421.0 990.0M1420.8 995.2L1424.1 990.3M1422.7 995.5L1426.0 990.7M1424.3 998.3L1428.1 992.6M1428.0 997.4L1429.1 995.8M1428.9 1001.5L1433.2 995.2M1432.4 1001.7L1434.3 998.8M1434.3 1002.1L1435.8 999.9M1436.8 1004.7L1439.2 1001.1M1437.4 1007.5L1441.9 1000.7M1441.1 1007.3L1443.8 1003.2M1442.2 1009.4L1445.5 1004.5M1443.5 1011.5L1448.1 1004.7M1446.9 1013.3L1450.8 1007.4M1448.7 1014.4L1453.8 1007.0M1451.7 1014.4L1454.2 1010.8M1454.3 1015.6L1456.1 1013.0M1456.4 1017.9L1459.0 1014.1M1457.6 1020.3L1461.4 1014.7M1460.2 1020.4L1462.3 1017.3M1462.2 1021.7L1464.1 1019.0M1464.5 1023.7L1466.6 1020.5M1467.4 1024.9L1469.7 1021.5M1469.5 1025.9L1471.6 1022.7M1470.1 1028.8L1474.2 1022.7M1473.8 1028.9L1475.4 1026.6M1474.9 1032.3L1479.6 1025.3M1478.3 1031.2L1479.3 1029.7M1479.5 1034.4L1483.0 1029.2M1481.6 1037.1L1485.5 1031.3M1484.4 1038.0L1487.8 1033.0M1487.2 1037.5L1488.3 1035.9M1488.7 1039.8L1490.7 1036.9M1490.6 1042.3L1495.0 1035.9M1493.3 1042.5L1495.9 1038.6M1494.8 1045.6L1500.0 1038.0M1496.8 1046.5L1501.1 1040.2M1499.4 1046.7L1501.5 1043.7M1500.9 1050.3L1506.3 1042.2M1504.4 1049.0L1505.8 1046.9M1505.8 1052.8L1510.7 1045.6M1508.6 1051.9L1509.9 1050.0M1511.8 1054.0L1513.3 1051.9M1511.8 1057.3L1515.9 1051.2M1514.9 1058.5L1517.5 1054.6M1518.2 1058.3L1519.4 1056.5M1520.0 1060.5L1521.8 1057.9M1522.1 1061.8L1524.5 1058.3M1524.5 1063.2L1526.3 1060.6" stroke="#33425a" stroke-width="1.8" opacity="0.85"/>
<path d="M636.7 414.0L677.8 488.5" stroke="#878080" stroke-width="2.76"/>
<path d="M635.4 415.3L638.9 413.4M636.4 417.7L640.4 415.5M638.2 419.7L640.6 418.3M639.8 422.1L641.5 421.2M640.8 424.1L642.7 423.0M642.5 426.4L644.1 425.5M643.0 428.9L646.0 427.3M644.0 431.5L647.5 429.5M644.6 434.3L648.6 432.1M647.0 436.2L650.6 434.2M648.8 438.8L650.7 437.7M648.7 441.6L654.7 438.3M650.3 443.5L653.8 441.5M652.3 446.4L655.8 444.4M653.9 447.8L656.2 446.5M654.8 450.6L658.2 448.7M656.7 452.1L658.1 451.3M657.8 454.1L659.6 453.1M659.4 457.6L661.2 456.7M659.7 459.5L662.4 457.9M661.5 461.4L663.3 460.5M663.1 463.6L664.6 462.8M663.3 467.7L667.2 465.5M664.6 468.5L668.2 466.6M666.1 472.1L669.2 470.4M666.1 473.7L672.0 470.5M669.1 475.4L671.7 473.9M671.0 478.5L673.1 477.4M671.0 480.8L674.5 478.8M671.8 483.0L676.0 480.6M674.6 485.6L677.2 484.1M676.0 487.4L677.7 486.4M677.2 490.3L679.4 489.1" stroke="#878080" stroke-width="1.8" opacity="0.85"/>
<path d="M623.9 779.4L1233.3 1449.6" stroke="#878080" stroke-width="4.14"/>
<path d="M622.6 780.9L625.0 778.6M623.3 784.2L629.7 778.4M623.3 787.3L632.4 779.0M628.9 787.0L631.2 785.0M629.3 789.4L634.3 784.8M630.4 791.3L635.4 786.7M631.3 794.3L638.1 788.2M635.2 794.7L638.6 791.6M634.7 798.8L642.8 791.4M637.6 798.9L641.6 795.3M637.9 802.5L646.7 794.4M641.2 803.5L646.3 798.9M642.4 805.6L647.2 801.2M645.3 806.9L649.3 803.3M644.9 810.1L651.8 803.9M646.5 812.5L655.0 804.7M648.5 815.1L656.8 807.6M650.0 816.5L658.8 808.5M653.1 817.3L659.5 811.5M653.6 819.9L659.7 814.3M657.3 820.5L662.6 815.6M659.8 821.7L662.2 819.6M658.6 825.7L667.0 818.1M660.1 827.6L668.4 820.1M662.5 829.2L671.0 821.5M665.3 831.1L672.9 824.2M667.9 832.6L672.0 828.9M670.1 832.5L672.3 830.5M669.7 837.5L676.6 831.2M672.3 837.8L677.3 833.2M675.7 839.3L678.4 836.9M675.9 842.7L681.7 837.3M679.4 843.3L681.5 841.3M679.8 845.4L683.8 841.8M679.7 849.3L686.9 842.7M682.1 850.1L688.6 844.1M684.6 851.5L690.4 846.3M687.6 852.6L690.3 850.2M687.0 855.8L692.5 850.8M689.5 858.2L694.4 853.7M692.7 858.9L696.7 855.3M693.7 861.5L699.9 855.9M697.0 861.9L698.9 860.2M697.5 864.7L702.1 860.6M697.5 868.8L707.7 859.5M699.4 870.4L708.4 862.2M701.4 872.0L709.5 864.6M704.9 872.8L709.4 868.7M704.8 875.1L710.0 870.4M707.5 876.1L711.2 872.8M708.2 880.4L718.2 871.3M712.1 879.3L715.1 876.6M712.7 881.7L717.9 877.1M713.7 885.3L720.9 878.7M715.4 887.0L721.4 881.6M718.2 888.8L723.8 883.7M720.3 888.9L723.1 886.3M721.8 891.3L725.5 887.9M722.5 894.1L728.4 888.7M724.1 896.5L732.3 889.0M727.8 897.2L732.0 893.4M729.9 898.7L733.2 895.7M729.8 902.9L735.8 897.4M732.5 903.3L737.4 898.9M732.0 906.5L741.2 898.2M734.5 908.8L741.7 902.3M736.6 909.5L743.6 903.1M739.3 911.5L745.2 906.2M741.8 912.2L744.6 909.6M741.0 916.6L748.0 910.3M742.4 918.3L752.9 908.7M744.7 919.6L753.7 911.5M746.6 922.4L753.0 916.6M748.8 923.4L756.7 916.2M751.1 925.9L756.7 920.8M752.6 927.8L757.9 923.1M756.1 928.0L759.1 925.3M756.7 930.2L760.5 926.7M757.8 933.0L763.9 927.5M761.1 932.9L763.7 930.5M762.4 935.2L766.2 931.7M762.1 938.7L768.3 933.1M764.4 941.8L771.8 935.0M766.1 943.1L772.9 937.0M767.0 945.3L777.1 936.2M769.8 947.3L775.7 941.9M773.4 947.5L776.8 944.5M773.2 950.5L780.0 944.3M776.9 951.5L780.7 948.0M779.1 952.9L782.0 950.2M780.5 954.4L783.0 952.2M780.7 958.0L785.9 953.3M784.2 957.8L786.0 956.2M784.6 961.5L789.3 957.2M786.2 963.8L790.9 959.5M787.0 966.5L794.6 959.6M788.2 967.9L795.4 961.3M792.2 968.4L796.6 964.5M791.9 971.8L797.9 966.3M796.4 971.6L798.9 969.4M796.7 975.7L803.1 969.9M798.5 977.7L805.3 971.5M799.7 978.6L804.2 974.5M801.1 982.3L808.2 975.8M802.9 983.0L808.0 978.3M806.3 984.4L811.3 979.8M808.3 986.3L812.6 982.3M808.9 987.9L814.5 982.9M811.5 989.1L814.9 986.0M812.1 992.7L818.8 986.7M814.0 994.1L818.4 990.2M816.6 996.0L822.1 990.9M818.3 997.0L821.9 993.7M819.5 999.3L823.4 995.8M819.7 1003.6L830.5 993.8M822.2 1005.3L830.4 997.9M825.1 1005.5L828.9 1002.0M826.7 1007.7L832.0 1002.9M829.2 1008.6L833.4 1004.8M829.2 1012.9L836.1 1006.6M830.7 1014.2L836.2 1009.2M833.5 1015.3L837.9 1011.4M835.0 1018.1L841.8 1012.0M837.8 1017.7L840.3 1015.4M837.4 1021.8L846.4 1013.6M840.9 1022.2L844.9 1018.6M841.7 1024.7L846.7 1020.2M845.4 1025.6L848.5 1022.7M845.2 1029.9L851.7 1024.0M846.1 1031.6L855.1 1023.3M848.6 1034.1L857.5 1026.0M852.4 1033.1L855.0 1030.8M853.4 1035.2L857.5 1031.4M854.6 1038.3L860.5 1032.9M858.1 1039.2L859.9 1037.6M858.7 1042.2L862.8 1038.4M858.6 1046.0L866.8 1038.6M861.0 1046.8L867.6 1040.7M862.3 1049.3L868.1 1044.0M864.4 1050.7L872.2 1043.6M864.8 1053.1L874.4 1044.4M869.4 1052.3L872.9 1049.2M870.6 1056.0L876.3 1050.8M871.4 1058.2L878.0 1052.2M874.0 1060.4L879.1 1055.7M874.3 1062.1L882.7 1054.3M876.3 1065.1L883.5 1058.5M878.6 1066.7L886.7 1059.3M882.3 1065.8L884.8 1063.5M881.3 1070.1L887.3 1064.6M883.7 1071.1L890.2 1065.1M886.2 1073.9L892.5 1068.2M888.3 1074.4L892.1 1070.9M889.3 1077.0L894.5 1072.3M890.5 1079.5L898.1 1072.6M892.2 1081.1L899.1 1074.8M893.2 1084.3L901.2 1076.9M898.3 1083.2L900.0 1081.6M897.9 1086.9L904.4 1081.0M901.6 1087.7L904.1 1085.5M901.0 1090.5L907.0 1085.1M902.3 1092.9L908.6 1087.2M905.2 1094.6L912.3 1088.1M907.4 1095.8L912.7 1091.0M909.8 1096.8L912.4 1094.4M909.8 1100.7L916.4 1094.7M913.1 1100.5L915.5 1098.4M912.4 1104.8L921.6 1096.5M917.1 1105.0L920.7 1101.8M918.7 1106.0L921.1 1103.8M919.6 1108.9L923.0 1105.8M920.2 1112.9L927.6 1106.1M921.6 1114.1L928.8 1107.6M925.1 1114.8L929.0 1111.3M925.9 1117.9L932.2 1112.1M928.0 1118.7L931.7 1115.4M931.5 1119.9L933.4 1118.2M932.6 1123.1L937.2 1119.0M932.2 1126.2L940.8 1118.5M935.8 1125.9L939.7 1122.3M937.2 1128.8L942.8 1123.8M937.5 1132.8L944.2 1126.7M938.9 1134.5L948.2 1126.0M940.4 1136.4L949.7 1128.0M945.2 1136.3L947.9 1133.9M946.9 1137.7L950.4 1134.5M948.4 1139.2L950.8 1137.0M949.2 1143.0L955.2 1137.5M951.4 1144.6L955.3 1141.0M953.4 1146.0L958.3 1141.6M952.7 1149.1L962.0 1140.7M955.2 1151.7L961.5 1145.9M958.5 1151.6L963.1 1147.4M961.2 1152.6L963.5 1150.5M962.2 1155.0L965.2 1152.2M964.4 1156.0L966.1 1154.5M964.9 1159.7L970.7 1154.4M965.9 1161.5L971.4 1156.5M966.4 1164.7L974.4 1157.4M969.9 1166.0L975.8 1160.7M970.4 1168.6L977.6 1162.0M972.3 1171.4L980.6 1163.8M976.3 1170.7L979.3 1168.1M976.0 1173.7L983.9 1166.5M978.5 1175.1L985.6 1168.6M981.7 1176.0L984.9 1173.1M980.5 1180.5L990.2 1171.6M983.9 1181.3L990.0 1175.8M985.2 1184.4L994.4 1176.0M986.8 1185.8L994.6 1178.7M990.6 1185.6L994.0 1182.5M991.6 1188.4L996.0 1184.4M993.9 1190.4L997.3 1187.3M995.4 1191.3L999.6 1187.6M995.4 1195.7L1002.6 1189.2M999.3 1196.1L1003.2 1192.5M1000.9 1196.7L1003.4 1194.5M1001.5 1199.6L1006.0 1195.5M1002.1 1203.0L1009.4 1196.4M1005.1 1204.8L1012.3 1198.3M1006.2 1206.1L1013.9 1199.1M1009.1 1207.2L1012.8 1203.8M1009.6 1211.4L1018.5 1203.4M1012.4 1211.3L1017.3 1206.8M1014.4 1214.1L1018.7 1210.2M1014.7 1216.2L1020.3 1211.1M1015.8 1218.4L1022.8 1212.0M1018.6 1220.6L1025.3 1214.4M1022.5 1220.1L1024.9 1218.0M1022.1 1224.6L1030.6 1216.9M1023.4 1225.6L1029.1 1220.4M1026.8 1227.4L1031.1 1223.4M1028.1 1229.4L1032.8 1225.2M1029.6 1231.3L1036.0 1225.4M1030.3 1234.7L1039.1 1226.7M1033.4 1234.2L1037.5 1230.5M1035.8 1236.2L1038.9 1233.3M1034.8 1239.6L1041.2 1233.8M1038.1 1241.4L1043.0 1237.0M1039.6 1243.4L1048.0 1235.8M1041.0 1244.6L1046.6 1239.5M1044.2 1246.7L1049.1 1242.2M1045.9 1248.5L1050.3 1244.4M1046.4 1250.9L1051.8 1245.9M1049.0 1251.9L1055.2 1246.3M1050.4 1253.7L1054.7 1249.8M1052.1 1257.1L1059.7 1250.2M1054.1 1257.3L1059.8 1252.1M1057.5 1258.5L1060.0 1256.1M1058.5 1261.2L1062.4 1257.6M1060.8 1262.3L1062.7 1260.6M1060.3 1267.4L1068.2 1260.2M1061.8 1268.1L1068.3 1262.2M1063.6 1270.7L1070.9 1264.0M1067.2 1271.7L1071.8 1267.5M1068.9 1273.0L1073.4 1268.9M1071.0 1273.5L1073.5 1271.3M1071.8 1277.7L1078.4 1271.6M1073.9 1279.2L1080.1 1273.6M1076.6 1280.4L1079.5 1277.8M1075.3 1284.5L1083.1 1277.4M1077.7 1286.1L1084.0 1280.3M1080.3 1287.5L1087.5 1280.9M1081.0 1289.6L1086.7 1284.5M1082.5 1291.9L1090.6 1284.5M1086.7 1292.1L1091.1 1288.1M1087.6 1295.3L1092.2 1291.1M1090.8 1295.9L1093.1 1293.8M1089.3 1299.7L1097.3 1292.4M1091.5 1301.2L1100.7 1292.9M1093.0 1303.4L1099.4 1297.6M1097.3 1303.3L1100.0 1300.9M1099.0 1305.2L1102.8 1301.7M1098.8 1308.7L1105.1 1303.0M1101.4 1310.9L1106.7 1306.1M1105.0 1311.0L1107.2 1309.1M1105.8 1313.4L1110.6 1309.0M1107.9 1315.5L1110.8 1312.9M1107.3 1318.6L1115.1 1311.5M1109.9 1320.5L1117.7 1313.4M1110.4 1323.0L1120.9 1313.5M1112.4 1324.2L1118.2 1318.9M1116.8 1324.0L1118.7 1322.2M1116.7 1327.8L1122.1 1322.9M1117.3 1330.2L1123.6 1324.5M1121.0 1331.4L1126.7 1326.1M1123.6 1332.7L1126.6 1330.0M1125.0 1333.7L1127.5 1331.5M1127.4 1336.0L1130.7 1333.0M1129.2 1338.0L1132.6 1334.9M1129.1 1341.4L1136.3 1334.9M1132.3 1341.7L1135.1 1339.1M1133.1 1345.2L1137.8 1340.9M1134.9 1347.2L1141.4 1341.3M1138.1 1347.0L1140.1 1345.1M1139.4 1349.0L1141.5 1347.1M1138.4 1353.0L1147.6 1344.7M1142.7 1353.4L1146.4 1350.0M1141.7 1357.3L1148.9 1350.8M1144.8 1359.3L1152.4 1352.3M1148.7 1358.9L1151.0 1356.8M1147.3 1363.3L1156.3 1355.1M1149.7 1364.6L1158.2 1356.9M1153.6 1365.4L1156.4 1362.8M1153.1 1368.4L1161.7 1360.6M1156.8 1368.0L1159.7 1365.3M1159.1 1370.1L1161.0 1368.4M1159.9 1373.0L1163.7 1369.5M1160.0 1377.3L1167.0 1370.9M1164.0 1377.1L1167.4 1373.9M1164.7 1379.9L1169.3 1375.7M1167.8 1380.0L1170.6 1377.5M1167.0 1383.7L1172.4 1378.8M1170.3 1385.1L1175.1 1380.7M1172.1 1385.6L1175.5 1382.6M1174.2 1388.8L1178.4 1385.0M1174.6 1391.4L1180.7 1385.8M1174.7 1393.9L1184.2 1385.2M1178.7 1394.3L1183.3 1390.1M1179.7 1397.2L1187.1 1390.5M1182.6 1398.9L1188.8 1393.3M1182.8 1400.8L1191.2 1393.2M1187.0 1400.9L1189.4 1398.7M1185.6 1405.8L1194.6 1397.7M1189.5 1406.7L1195.5 1401.2M1190.6 1408.2L1196.9 1402.5M1192.2 1410.0L1198.4 1404.3M1195.4 1411.6L1198.6 1408.6M1194.9 1414.5L1201.1 1408.8M1197.3 1415.9L1204.2 1409.7M1198.0 1419.0L1204.8 1412.9M1202.6 1418.3L1204.8 1416.3M1202.6 1422.3L1208.7 1416.8M1203.9 1424.1L1210.2 1418.3M1207.3 1425.0L1210.4 1422.2M1207.7 1428.5L1213.6 1423.2M1210.6 1428.9L1215.4 1424.6M1212.3 1431.1L1216.2 1427.5M1212.9 1434.3L1221.4 1426.6M1216.5 1434.4L1219.9 1431.4M1215.8 1438.7L1225.3 1430.1M1220.2 1438.2L1224.0 1434.8M1219.6 1441.0L1226.0 1435.2M1221.9 1442.6L1227.2 1437.8M1224.8 1443.6L1227.6 1441.0M1225.0 1446.9L1232.7 1439.9M1226.1 1449.2L1231.8 1444.1M1227.6 1452.2L1238.2 1442.6M1231.5 1452.8L1237.0 1447.8" stroke="#878080" stroke-width="1.8" opacity="0.85"/>
<path d="M503.1 450.6L700.4 608.4" stroke="#8c8482" stroke-width="2.53"/>
<path d="M501.1 453.1L505.3 447.8M504.8 454.0L506.3 452.2M506.4 456.2L508.9 453.1M509.1 457.1L510.4 455.5M510.3 458.6L512.5 455.9M511.6 461.2L516.1 455.5M514.0 463.0L517.5 458.6M517.3 463.8L519.3 461.3M518.7 466.1L522.1 461.8M521.2 467.2L523.3 464.5M522.5 469.8L526.6 464.7M523.6 471.3L528.5 465.3M526.1 473.2L530.7 467.5M528.2 474.7L532.7 469.0M531.2 474.3L532.7 472.5M532.3 478.4L536.3 473.3M534.7 479.9L539.0 474.5M536.2 480.5L539.2 476.8M538.9 482.6L542.1 478.5M540.9 484.0L543.3 481.0M543.0 485.5L545.6 482.2M545.2 486.8L547.3 484.2M546.8 488.5L549.2 485.5M549.7 489.9L551.3 487.9M550.9 491.8L553.9 488.0M553.9 493.0L555.7 490.7M555.4 495.0L558.3 491.5M556.5 497.6L561.5 491.4M560.1 497.3L561.1 496.0M560.8 501.3L565.4 495.5M563.5 501.5L566.6 497.7M564.7 502.8L567.5 499.3M567.5 503.6L569.1 501.6M569.0 506.9L572.0 503.1M571.8 508.2L574.7 504.5M573.1 510.4L576.4 506.1M576.2 510.7L577.5 509.1M578.3 512.4L580.2 510.1M579.2 515.9L582.6 511.7M580.7 516.5L584.9 511.3M583.7 518.2L586.3 514.9M585.4 520.3L588.2 516.8M588.3 520.2L589.4 518.7M589.8 523.4L593.8 518.5M590.8 524.6L594.7 519.8M593.8 525.2L595.8 522.8M595.5 527.9L598.1 524.6M598.0 528.5L599.5 526.6M599.8 530.8L603.1 526.6M601.5 532.4L604.5 528.6M603.8 533.3L606.2 530.2M606.0 535.8L608.9 532.1M607.8 537.8L611.5 533.1M610.0 538.2L612.0 535.7M612.0 540.7L615.2 536.7M613.8 543.4L617.4 539.0M616.5 542.7L617.9 541.0M617.4 546.1L621.6 540.8M619.5 547.0L622.1 543.8M621.6 549.6L625.0 545.3M624.2 550.8L627.0 547.2M625.9 552.0L629.4 547.6M628.2 552.9L630.7 549.7M630.1 556.5L634.0 551.7M631.9 556.4L635.1 552.4M635.1 558.5L637.0 556.0M637.0 558.9L638.5 557.1M638.4 562.6L641.4 558.9M640.0 564.3L645.1 558.0M643.2 565.0L645.2 562.6M643.7 566.7L647.0 562.5M646.3 568.1L649.3 564.4M649.3 569.2L650.7 567.4M650.6 571.5L653.6 567.8M652.1 573.8L656.4 568.5M655.4 573.7L656.9 571.8M657.9 575.8L659.2 574.2M658.8 578.5L662.6 573.9M661.0 578.8L663.2 576.0M663.1 580.2L665.0 577.8M664.3 582.8L667.0 579.5M667.0 584.0L669.5 580.8M668.3 587.1L673.6 580.5M671.5 587.2L673.8 584.4M674.2 588.8L675.2 587.5M675.8 590.1L677.0 588.6M676.4 593.0L679.3 589.4M679.5 593.0L681.1 591.0M681.1 596.4L684.1 592.7M684.0 596.8L685.4 595.1M686.3 598.6L687.4 597.1M687.1 600.0L689.4 597.1M688.5 602.7L693.0 597.1M692.5 603.5L694.0 601.7M693.5 604.9L695.9 601.8M694.9 607.8L698.5 603.2M697.4 609.7L700.9 605.3M698.7 610.5L701.8 606.5" stroke="#8c8482" stroke-width="1.8" opacity="0.85"/>
<path d="M700.4 608.4L749.1 688.0" stroke="#878080" stroke-width="2.76"/>
<path d="M698.2 611.0L703.9 607.5M699.4 613.5L706.3 609.3M700.7 615.5L707.3 611.5M703.0 617.1L706.6 614.9M704.5 619.5L708.6 617.0M706.2 620.9L708.9 619.3M707.7 623.5L710.1 622.0M709.7 625.6L711.4 624.6M711.0 627.4L712.5 626.4M710.3 630.9L716.9 626.9M711.6 633.0L717.0 629.7M714.3 635.0L718.4 632.5M715.5 636.9L718.2 635.2M717.9 639.2L720.1 637.8M719.5 641.3L721.4 640.1M719.4 644.8L723.6 642.3M720.7 647.0L725.9 643.9M721.2 648.8L726.6 645.5M724.7 650.3L726.7 649.1M724.6 653.9L729.6 650.8M726.4 656.3L730.4 653.8M727.6 657.7L731.0 655.6M729.5 660.1L732.5 658.3M731.5 661.5L733.7 660.2M733.0 664.2L735.5 662.7M733.4 667.0L737.6 664.4M735.7 668.7L738.0 667.3M735.4 672.2L742.6 667.8M738.3 673.7L741.0 672.0M739.2 676.7L743.1 674.3M739.9 679.3L745.2 676.1M742.8 680.6L745.3 679.0M743.7 682.1L746.0 680.7M745.4 685.0L748.7 683.0M746.8 687.3L750.2 685.2M747.7 689.4L750.2 687.9" stroke="#878080" stroke-width="1.8" opacity="0.85"/>
<path d="M1682.8 527.8L1727.6 542.5" stroke="#8c8482" stroke-width="2.53"/>
<path d="M1682.8 531.2L1685.2 523.8M1685.1 530.5L1686.1 527.3M1687.5 533.1L1689.2 527.8M1690.3 532.1L1691.5 528.4M1692.3 533.2L1693.3 530.1M1695.4 533.6L1696.4 530.4M1697.5 534.2L1698.5 531.2M1700.6 534.9L1701.3 532.5M1702.9 535.6L1703.5 533.9M1705.6 536.6L1706.4 534.1M1707.4 539.1L1709.2 533.6M1710.4 539.2L1711.9 534.6M1712.7 540.0L1714.4 534.6M1715.2 540.4L1716.7 535.9M1717.0 542.7L1718.9 536.7M1719.7 541.8L1720.8 538.2M1723.2 542.8L1724.4 539.1M1724.7 544.9L1726.9 537.9M1727.0 545.9L1729.6 537.7" stroke="#8c8482" stroke-width="1.8" opacity="0.85"/>
<path d="M1653.8 696.0L1710.7 720.1" stroke="#8c8482" stroke-width="2.53"/>
<path d="M1653.3 698.5L1654.8 694.9M1656.3 698.1L1656.8 696.7M1658.1 700.3L1660.2 695.4M1661.8 700.6L1662.9 698.2M1663.5 702.7L1665.4 698.1M1666.6 703.4L1667.8 700.4M1667.5 705.4L1669.8 700.1M1670.6 705.2L1672.0 701.9M1674.2 705.8L1675.1 703.7M1675.5 708.8L1678.7 701.2M1677.7 708.6L1679.4 704.6M1681.1 708.6L1681.7 707.2M1682.9 710.4L1684.2 707.2M1685.8 711.8L1687.2 708.5M1687.6 713.4L1690.1 707.5M1691.1 712.8L1691.8 711.1M1692.6 715.9L1695.5 709.0M1695.7 715.8L1697.0 712.9M1698.6 716.4L1699.4 714.4M1700.1 719.3L1702.3 714.2M1703.2 718.2L1704.0 716.4M1705.5 718.9L1706.0 717.7M1707.6 720.8L1709.0 717.5M1711.0 722.2L1712.4 718.9" stroke="#8c8482" stroke-width="1.8" opacity="0.85"/>
<ellipse cx="1037" cy="324.5" rx="10.5" ry="2.6" fill="#3e4f6b"/>
<ellipse cx="976" cy="354.6" rx="12.3" ry="2.4" fill="#3e4f6b"/>
<ellipse cx="908" cy="391.3" rx="15.4" ry="5.8" fill="#3e4f6b"/>
<ellipse cx="1044" cy="380" rx="15" ry="4.3" fill="#3e4f6b"/>
<ellipse cx="974" cy="419" rx="12" ry="2.5" fill="#3e4f6b"/>
<ellipse cx="822" cy="432.5" rx="21" ry="6" fill="#3e4f6b"/>
<polygon points="701.7,488 726.4,475.4 752.3,480 730.5,492.6" fill="#3e4f6b"/>
<ellipse cx="896" cy="468.8" rx="16" ry="5" fill="#3e4f6b"/>
<ellipse cx="795.4" cy="526.9" rx="17.2" ry="3.8" fill="#3e4f6b"/>
<polygon points="622,539 630,541 628,545 620,543" fill="#3e4f6b"/>
<polygon points="689,593 697,591 700,598 693,600" fill="#3e4f6b"/>
<polygon points="1411.6,574.7 1429,561.7 1442,566.9 1471.2,573.4 1475,581.2 1442,584.4 1425.9,580.5" fill="#3e4f6b"/>
<polygon points="1345.7,684.7 1357.2,676.8 1375.9,676 1399.6,681.8 1420.5,689 1413.3,697.6 1375.9,701.2 1358,694.7" fill="#3e4f6b"/>
<path d="M1366.6 668.1 L1399.6 681.8" stroke="#3e4f6b" stroke-width="3"/>
<polygon points="1253.8,830.3 1265.9,822.6 1291.7,825.2 1326.2,835.5 1334.8,850.2 1343.4,869.1 1317.6,882.1 1278.8,867.4 1261.6,854.5 1254.7,842.4" fill="#3e4f6b"/>
<polygon points="853,864 881,867 820,930 787,930" fill="#33455f"/>
<path d="M1048 294 L1056 295 L1057.5 304 L1053 307 L1057.5 312 L1053 318 L1050 317 L1046 312 L1045 300Z" fill="#dcc41e"/>
<path d="M1049 301 L1055 302 M1049 309 L1055 310" stroke="#a89414" stroke-width="1"/>
<rect x="985" y="321.5" width="11.5" height="26" rx="5.8" fill="#c9c4c4" transform="rotate(-6 991 335)"/>
<path d="M985.8 335 H997.2 V342 A5.7 5.7 0 0 1 985.8 342Z" fill="#a3302d" transform="rotate(-6 991 335)"/>
<rect x="985" y="384.5" width="13" height="28" rx="6.5" fill="#c9c4c4" transform="rotate(-5 991.5 398)"/>
<path d="M985 400 H998 V406 A6.5 6.5 0 0 1 985 406Z" fill="#359a35" transform="rotate(-5 991.5 398)"/>
<path d="M912 364 Q916 357 926 358 Q935 360 935.5 369 Q936 376 932 379 L931 383 L925 382 L920 378 Q911 375 910.5 369Z" fill="#e9e3df"/>
<ellipse cx="921" cy="374" rx="2.6" ry="2.3" fill="#4a3f3a"/><ellipse cx="930" cy="370.5" rx="2" ry="2.6" fill="#4a3f3a"/><circle cx="929" cy="377.3" r="0.9" fill="#4a3f3a"/>
<path d="M1053 351 Q1056 345.5 1062 346 Q1067 347.5 1066.5 353 Q1066 358 1063 360 L1058 360 Q1053 357 1053 351Z" fill="#e6e0dc"/>
<path d="M1055 362 L1067 369 M1058 361 L1053 375 M1059 366 L1066 364" stroke="#e6e0dc" stroke-width="2.4"/>
<ellipse cx="1057.5" cy="356" rx="1.5" ry="1.8" fill="#4a3f3a"/><ellipse cx="1063" cy="354" rx="1.3" ry="1.8" fill="#4a3f3a"/>
<path d="M823 395 Q826 390 836 390.5 Q846 391 848 396 Q848 404 842 410 L838 412 L832 411 Q826 408 824 402Z" fill="#d4a92a"/>
<ellipse cx="836" cy="394.5" rx="10" ry="3.6" fill="#b58a1a"/>
<path d="M825 397 Q820 400 823 406 Q825 409 829 408" fill="none" stroke="#d4a92a" stroke-width="2"/>
<path d="M834 411 L840 411 L842 419 L833 419Z" fill="#d4a92a"/>
<path d="M833 419 Q833 415 842 416 Q851 418 850.5 424 Q850 428 842 428.5 Q834 428 833 424Z" fill="#7b4a2e"/>
<ellipse cx="846" cy="423" rx="2.6" ry="2.3" fill="#d8ac30"/>
<polygon points="718.4,455 744.8,442.1 747,444 723,457 734.5,481.1 732,480" fill="#cdd0d6"/>
<polygon points="722.5,456.5 745.5,443.5 751.7,445.5 760.3,468.5 734.5,481.1" fill="#393535"/>
<path d="M741 456 L747 454 L748.5 459 L753 458 L754.5 463 L749.5 465 L750.5 470 L744.5 472 L743 467 L738 469 L736.5 464 L741.5 462Z" fill="#c8c4c4"/>
<path d="M903 435 L913 433 L920 437 L921 447 L916 449 L921.3 452 L921.3 459 L916 463 L911 461 L904 450 L901 440Z" fill="#e02a2a"/>
<path d="M911 442 L918 441 M912 452 L918 451" stroke="#9a1a1a" stroke-width="1"/>
<g transform="rotate(-22 811 505)"><rect x="804" y="491" width="14" height="28" rx="7" fill="#c4c0c0"/><path d="M804 506 H818 V512 A7 7 0 0 1 804 512Z" fill="#2a4ec0"/></g>
<polygon points="608.4,510.3 627,510.7 630,518.4 632.6,529.7 635.6,534.4 626.6,535.3 621.4,540.9 600.3,522.8" fill="#3aa2c2"/>
<path d="M615 518 L609 526 M620 528 L616 536" stroke="#226e88" stroke-width="0.9"/>
<path d="M667 576 Q664 561 677 555 Q688 553 692 564" fill="none" stroke="#8a8480" stroke-width="3.2"/>
<polygon points="665.3,575.8 696,560.7 707.6,579.7 687.8,593.4" fill="#5c5652"/>
<path d="M666 576 L696 561" stroke="#7a746f" stroke-width="1"/>
<path d="M687 577 Q690 574 692 577 Q693 580 691 581 L693 587 L689 588 L688 582 Q686 580 687 577Z" fill="#222"/>
<ellipse cx="1512.9" cy="533" rx="5.6" ry="8.6" fill="none" stroke="#5ccf5a" stroke-width="1.5" stroke-dasharray="3 1" transform="rotate(-22 1512.9 533)"/>
<path d="M1456.3 545.6 L1476.3 548.2" stroke="#1fa3a3" stroke-width="2.6"/>
<path d="M1460.8 574.7 L1471.8 562.4" stroke="#262838" stroke-width="3.6" stroke-linecap="round"/><path d="M1485.4 568.2 L1496.4 581.8" stroke="#262838" stroke-width="2.6" stroke-linecap="round"/>
<rect x="1471.2" y="551.8" width="22" height="19" rx="6" fill="#d9d9d9"/>
<rect x="1482.1" y="566.9" width="8.5" height="7.8" rx="2" fill="#2eb0b8"/>
<ellipse cx="1491.2" cy="540.6" rx="12.4" ry="12.2" transform="rotate(-30 1491.2 540.6)" fill="#dcb585"/>
<polygon points="1480.9,546.2 1480.2,537.2 1484.1,529.4 1491.8,528.6 1493.1,534.6 1484.1,546.2" fill="#2c2634"/>
<polygon points="1493.8,529.4 1502.8,526.2 1504.8,531.3 1503.5,535.9" fill="#2c2634"/>
<path d="M1476.5 551.5 Q1480 549 1484.5 553.5" stroke="#8dcc48" stroke-width="3" fill="none"/>
<ellipse cx="1459.2" cy="646.9" rx="7.6" ry="11" fill="none" stroke="#e56fa8" stroke-width="1.5" stroke-dasharray="3 1" transform="rotate(-22 1459.2 646.9)"/>
<path d="M1396.8 653 L1419.7 658.8" stroke="#262838" stroke-width="2.4"/><path d="M1396.8 653 L1401 654" stroke="#d8308a" stroke-width="3"/>
<path d="M1399.6 686.8 L1411.8 676.8" stroke="#262838" stroke-width="3.6" stroke-linecap="round"/><path d="M1424.8 689 L1442 702.6" stroke="#262838" stroke-width="2.4" stroke-linecap="round"/>
<ellipse cx="1402.5" cy="686" rx="4" ry="2.8" fill="#e06585"/>
<rect x="1412" y="661" width="27" height="27" rx="8" fill="#d9d9d9"/>
<rect x="1424.8" y="682.5" width="12.9" height="8.6" rx="2" fill="#c65a78"/>
<ellipse cx="1434.9" cy="653.8" rx="14.2" ry="15.4" transform="rotate(-30 1434.9 653.8)" fill="#dcb585"/>
<polygon points="1421.9,660.2 1421.2,648.7 1427.6,640.8 1434.8,641.6 1435.5,648.7 1426.2,661.7" fill="#2c2634"/>
<polygon points="1436.3,640.1 1449.9,636.2 1450.6,641.6 1449.2,648.7" fill="#2c2634"/>
<path d="M1416 664 L1424 660" stroke="#e890b0" stroke-width="3"/>
<ellipse cx="1384" cy="814.4" rx="8.6" ry="15" fill="none" stroke="#e8c860" stroke-width="1.6" transform="rotate(-15 1384 814.4)"/><ellipse cx="1384" cy="814.4" rx="5" ry="9" fill="none" stroke="#e8c860" stroke-width="1.3" transform="rotate(-15 1384 814.4)"/>
<polygon points="1325,818 1337,820 1338,848 1330,856 1322,852 1315,845 1316,839 1326,838" fill="#dedede"/>
<path d="M1325.3 832 L1335.7 849.3" stroke="#3a8a8a" stroke-width="1.3"/>
<polygon points="1340,782.9 1343.4,789 1355.5,790.7 1365,795.9 1369.3,808.8 1371,821.7 1381.4,839 1377.1,850.2 1367.6,863.1 1356.4,870 1347.8,864 1335.7,863.1 1334.8,847.6 1334,813.1 1335.7,795.9" fill="#e06a78"/>
<polygon points="1321,810.5 1334,811.4 1333.1,821.7 1324.5,818.3" fill="#4a4048"/>
<rect x="1350.8" y="825.2" width="9" height="4.3" fill="#e8e8e8"/>
<path d="M1369.3 813.1 L1383.1 840.7" stroke="#e06a78" stroke-width="1.8"/>
<path d="M945.8 801.9L1115.0 930.0" stroke="#878080" stroke-width="3.68"/>
<path d="M945.2 803.9L947.3 801.1M946.0 806.0L949.4 801.5M949.5 806.9L951.6 804.1M949.6 810.9L955.0 803.6M953.0 811.1L957.4 805.3M954.9 811.9L957.8 808.2M957.0 813.7L960.1 809.6M959.8 814.2L961.2 812.2M961.0 816.7L964.1 812.6M962.9 819.0L966.3 814.6M964.8 821.6L970.9 813.5M966.7 822.3L971.9 815.4M968.9 823.8L972.3 819.3M972.6 824.2L975.0 821.1M974.6 825.8L976.1 823.7M974.1 830.2L979.4 823.3M976.9 830.8L982.8 823.0M978.9 833.5L984.6 825.9M982.8 832.6L985.7 828.8M982.2 836.4L988.3 828.4M984.9 837.5L989.3 831.7M987.1 839.3L993.2 831.2M991.3 838.9L993.6 835.9M992.7 840.8L995.3 837.4M995.0 841.7L997.0 838.9M995.8 846.4L1001.5 838.8M997.8 847.9L1005.5 837.7M1001.2 846.6L1004.5 842.2M1002.9 849.9L1008.6 842.3M1004.4 852.0L1010.6 843.8M1007.2 852.4L1010.6 847.9M1009.8 852.4L1012.2 849.2M1010.3 857.6L1017.9 847.5M1012.3 858.7L1017.7 851.5M1013.8 860.2L1021.2 850.5M1016.6 861.5L1022.1 854.2M1019.3 862.9L1024.9 855.5M1021.3 864.1L1025.0 859.3M1023.5 864.9L1028.4 858.5M1025.9 866.3L1030.2 860.7M1028.5 866.7L1030.6 863.9M1030.3 869.0L1033.8 864.3M1032.2 871.5L1036.3 866.1M1034.8 872.0L1038.0 867.7M1035.8 875.5L1039.8 870.1M1036.7 877.7L1043.2 869.0M1041.0 877.0L1043.6 873.6M1042.2 878.9L1045.3 874.9M1043.8 881.3L1047.7 876.2M1047.7 880.7L1049.0 878.9M1049.4 883.9L1052.7 879.5M1051.7 884.7L1053.7 882.1M1052.5 888.7L1058.6 880.8M1056.1 888.1L1059.2 883.9M1058.0 889.0L1059.9 886.4M1060.3 891.1L1062.3 888.4M1061.4 893.8L1066.0 887.8M1062.2 897.0L1069.3 887.7M1066.4 896.5L1070.0 891.7M1069.1 896.9L1071.0 894.4M1070.3 898.9L1072.6 895.8M1071.1 902.8L1078.3 893.4M1073.8 902.1L1076.5 898.4M1077.1 903.3L1078.7 901.2M1076.9 907.0L1081.6 900.8M1079.8 907.5L1083.4 902.8M1082.7 908.0L1085.1 904.8M1085.2 910.7L1087.9 907.1M1087.4 910.9L1089.2 908.5M1088.1 914.2L1093.2 907.4M1090.8 915.7L1094.5 910.8M1092.9 916.5L1096.6 911.6M1094.9 918.6L1098.1 914.4M1096.9 919.5L1099.5 916.1M1097.3 923.7L1105.2 913.3M1102.4 922.4L1104.1 920.1M1103.7 924.4L1106.3 920.9M1105.0 926.6L1108.1 922.6M1107.6 927.0L1110.2 923.5M1108.8 929.5L1111.9 925.4M1111.3 932.2L1116.7 925.0M1114.1 931.9L1116.4 929.0" stroke="#878080" stroke-width="1.8" opacity="0.85"/>
<path d="M1143 924 L1538 763 L1700 802 M1538 763 L1430 930" stroke="#d8d4d0" stroke-width="1" fill="none" opacity="0.75"/>
<path d="M1700 802 L1832 837" stroke="#ffffff" stroke-width="2" fill="none"/>
</g></svg>
<div class="a" style="left:1834px;top:73px;width:726px;height:1297px;background:#2c2c2c"></div>
<div class="a" style="left:1834px;top:73px;width:726px;height:19px;background:#212121;border-radius:3px 3px 0 0"></div>
<div class="a" style="left:1834px;top:73px;width:93px;height:19px;background:#2c2c2c;border-radius:3px 3px 0 0"></div>
<svg style="left:1843px;top:78px" width="11" height="11" viewBox="0 0 11 11"><circle cx="5.5" cy="5.5" r="5.2" fill="#b8b8b8"/><rect x="4.6" y="4.5" width="1.9" height="4.6" fill="#222"/><rect x="4.6" y="2" width="1.9" height="1.7" fill="#222"/></svg>
<div class="t" style="left:1858px;top:76px;color:#c8c8c8;letter-spacing:0.2px">Inspector</div>
<svg style="left:1937px;top:77px" width="9" height="13" viewBox="0 0 9 13"><path d="M4.5 0.5 Q8.5 0.5 8.5 4.2 Q8.5 6.5 6.5 8.5 H2.5 Q0.5 6.5 0.5 4.2 Q0.5 0.5 4.5 0.5Z" fill="#b4b4b4"/><rect x="2.6" y="9.2" width="3.8" height="1.4" fill="#b4b4b4"/><rect x="3.2" y="11.2" width="2.6" height="1.2" fill="#b4b4b4"/></svg>
<div class="t" style="left:1952px;top:76px;color:#c8c8c8;letter-spacing:0.2px">Lighting</div>
<svg style="left:2524px;top:76px" width="10" height="12" viewBox="0 0 10 12"><path d="M2.5 5.5 V3.5 Q2.5 1 5 1 Q7.5 1 7.5 3" fill="none" stroke="#c0c0c0" stroke-width="1.2"/><rect x="1" y="6" width="8" height="5" fill="none" stroke="#c0c0c0" stroke-width="1.2"/></svg>
<svg style="left:2544px;top:77px" width="4" height="12"><rect x="0.5" y="0" width="2.5" height="2.5" fill="#c8c8c8"/><rect x="0.5" y="4.5" width="2.5" height="2.5" fill="#c8c8c8"/><rect x="0.5" y="9" width="2.5" height="2.5" fill="#c8c8c8"/></svg>
<!-- windows activation watermark -->
<svg style="left:2236px;top:1278px;will-change:transform" width="230" height="48" viewBox="0 0 230 48">
 <g stroke="#6e6e6e" stroke-width="1.4" fill="none">
  <path d="M3 5 L6 8 M2 11 L5 13 M2 21 L6 15 M9 3 V22 M9 3 H15 V10 H9 M9 13 H16 M12 10 V22 M19 3 L17 9 M18 7 H24 M22 7 Q21 17 16 22 M18 12 Q21 18 25 22"/>
  <path d="M29 4 L32 7 M28 10 L31 12 M28 21 L32 15 M36 5 Q42 4 47 2 M35 10 H48 M41 5 V15 M36 15 H46 V22 H36Z"/>
 </g>
 <text x="57" y="20" font-family="Liberation Sans" font-size="19.5" fill="#6e6e6e">Windows</text>
 <g stroke="#6a6a6a" stroke-width="1.1" fill="none" transform="translate(2 0) scale(0.78 1)">
  <path d="M3 30 H10 M6 28 V44 M2 37 H10 M3 41 L10 39 M12 31 H20 M14 28 L12 36 H20 M17 36 L16 44 M19 40 L21 43"/>
  <path d="M24 29 H32 M28 29 L25 35 H32 M24 39 H32 M28 35 V44 M24 44 H32 M35 30 V41 M38 28 V44 Q37 45 35 44"/>
  <path d="M42 29 L43 32 M46 29 L45 32"/>
  <path d="M50 29 L52 31 M49 35 H52 V42 L54 40 M56 29 H63 V33 Q63 35 65 35 M56 33 Q56 36 54 37 M55 38 H64 Q61 43 55 44 M57 40 Q60 43 65 44"/>
  <path d="M68 29 H83 V33 H68Z M72 29 V33 M76 29 V33 M79 29 V33 M75 33 V35 M69 35 H82 M71 37 H80 V44 H71Z M71 40 H80 M68 44 H83"/>
  <path d="M87 29 L88 32 M91 29 L90 32"/>
  <path d="M95 30 V43 L99 40 M97 33 L99 36 M104 29 Q104 38 99 44 M103 37 L107 44"/>
  <path d="M110 30 L112 32 M109 35 L112 37 M109 43 L112 38 M115 29 V44 M115 29 H120 V35 H115 M115 37 H121 M118 35 V44 M123 29 L121 34 M122 33 H127 M126 33 Q125 40 121 44 M122 37 Q124 41 128 44"/>
  <path d="M131 30 L133 32 M130 35 L133 37 M130 43 L133 38 M136 31 Q141 30 146 29 M135 34 H147 M141 30 V38 M136 38 H146 V44 H136Z"/>
 </g>
 <text x="123" y="43" font-family="Liberation Sans" font-size="14" fill="#6a6a6a">Windows</text>
 <circle cx="196" cy="41.5" r="1.8" fill="none" stroke="#6a6a6a" stroke-width="1"/>
</svg>
<div class="a" style="left:0;top:932px;width:1832px;height:438px;background:#2a2a2a"></div>
<div class="a" style="left:0;top:932px;width:1832px;height:19px;background:#212121;border-radius:3px 3px 0 0"></div>
<div class="a" style="left:0;top:932px;width:80px;height:19px;background:#2c2c2c;border-radius:3px 3px 0 0"></div>
<svg style="left:7px;top:937px" width="13" height="11" viewBox="0 0 13 11"><path d="M0.5 0.5 H5 L6.5 2 H12.5 V10.5 H0.5Z" fill="#b8b8b8"/></svg>
<div class="t" style="left:23px;top:936px;color:#c8c8c8;letter-spacing:0.2px">Project</div>
<svg style="left:89px;top:936px" width="12" height="12" viewBox="0 0 12 12"><circle cx="6" cy="6" r="5.8" fill="#b8b8b8"/><path d="M6 2.5 V6.3 H9" fill="none" stroke="#212121" stroke-width="1.3"/></svg>
<div class="t" style="left:105px;top:936px;color:#c8c8c8;letter-spacing:0.2px">Animation</div>
<svg style="left:187px;top:936px" width="12" height="11" viewBox="0 0 12 11"><rect x="0.5" y="0.5" width="11" height="10" fill="none" stroke="#b8b8b8" stroke-width="1"/><path d="M2.5 0.5 V10.5 M9.5 0.5 V10.5 M2.5 5.5 H9.5" stroke="#b8b8b8" stroke-width="1"/><path d="M0.5 2.5 H2.5 M0.5 4.5 H2.5 M0.5 6.5 H2.5 M0.5 8.5 H2.5 M9.5 2.5 H11.5 M9.5 4.5 H11.5 M9.5 6.5 H11.5 M9.5 8.5 H11.5" stroke="#b8b8b8" stroke-width="0.8"/></svg>
<div class="t" style="left:203px;top:936px;color:#c8c8c8;letter-spacing:0.2px">Timeline</div>
<svg style="left:278px;top:936px" width="11" height="12" viewBox="0 0 11 12"><rect x="0.5" y="0.5" width="10" height="11" fill="#b8b8b8"/><path d="M2.5 3 H8.5 M2.5 5.5 H8.5 M2.5 8 H8.5" stroke="#212121" stroke-width="1"/></svg>
<div class="t" style="left:293px;top:936px;color:#c8c8c8;letter-spacing:0.2px">Console</div>
<svg style="left:366px;top:936px" width="12" height="11" viewBox="0 0 12 11"><path d="M0.5 1 L5 5.5 L0.5 10 M5 5.5 H11.5 M9 3 L11.5 5.5 L9 8" fill="none" stroke="#b8b8b8" stroke-width="1.3"/></svg>
<div class="t" style="left:381px;top:936px;color:#c8c8c8;letter-spacing:0.2px">Animator</div>
<svg style="left:1797px;top:936px" width="10" height="12" viewBox="0 0 10 12"><path d="M2.5 5.5 V3.5 Q2.5 1 5 1 Q7.5 1 7.5 3" fill="none" stroke="#c0c0c0" stroke-width="1.2"/><rect x="1" y="6" width="8" height="5" fill="none" stroke="#c0c0c0" stroke-width="1.2"/></svg>
<svg style="left:1817px;top:936px" width="4" height="12"><rect x="0.5" y="0" width="2.5" height="2.5" fill="#c8c8c8"/><rect x="0.5" y="4.5" width="2.5" height="2.5" fill="#c8c8c8"/><rect x="0.5" y="9" width="2.5" height="2.5" fill="#c8c8c8"/></svg>
<div class="a" style="left:0;top:951px;width:1832px;height:20px;background:#2c2c2c"></div>
<div class="a" style="left:0;top:970px;width:1832px;height:2px;background:#232323"></div>
<svg style="left:7px;top:954px" width="24" height="13" viewBox="0 0 24 13"><path d="M6 0.5 V12.5 M0 6.5 H12" stroke="#c0c0c0" stroke-width="1.8"/><path d="M16 4.5 H23 L19.5 8.5Z" fill="#b0b0b0"/></svg>
<div class="a" style="left:1366px;top:952px;width:318px;height:17px;background:#1e1e1e;border:1px solid #242424;border-radius:4px;box-sizing:border-box"></div>
<svg style="left:1370px;top:956px" width="9" height="9" viewBox="0 0 9 9"><circle cx="3.5" cy="3.5" r="2.6" fill="none" stroke="#b0b0b0" stroke-width="1.2"/><path d="M5.5 5.5 L8.3 8.3" stroke="#b0b0b0" stroke-width="1.5"/></svg>
<div class="a" style="left:1667px;top:953px;width:16px;height:15px;background:#282828"></div>
<svg style="left:1668px;top:954px" width="13" height="13" viewBox="0 0 13 13"><rect x="4" y="1" width="8" height="8" fill="none" stroke="#b8b8b8" stroke-width="1"/><rect x="1" y="8" width="4" height="4" fill="none" stroke="#b8b8b8" stroke-width="1"/><path d="M5.5 7.5 L10 3 M7 3 H10 V6" fill="none" stroke="#b8b8b8" stroke-width="1"/></svg>
<div class="a" style="left:1686px;top:952px;width:1px;height:19px;background:#242424"></div>
<div class="a" style="left:1711px;top:952px;width:1px;height:19px;background:#242424"></div>
<div class="a" style="left:1737px;top:952px;width:1px;height:19px;background:#242424"></div>
<div class="a" style="left:1763px;top:952px;width:1px;height:19px;background:#242424"></div>
<div class="a" style="left:1790px;top:952px;width:1px;height:19px;background:#242424"></div>
<svg style="left:1692px;top:954px" width="14" height="13" viewBox="0 0 14 13"><rect x="0.5" y="0.5" width="5" height="5" fill="#b8b8b8"/><circle cx="3.3" cy="9.2" r="3.3" fill="#b8b8b8"/><path d="M9 3 L13.5 10 H6.5Z" fill="#b8b8b8"/></svg>
<svg style="left:1718px;top:955px" width="12" height="12" viewBox="0 0 12 12"><path d="M6 0.5 H11.5 V6 L6 11.5 L0.5 6Z" fill="#b8b8b8"/><circle cx="9" cy="3" r="1" fill="#2c2c2c"/></svg>
<svg style="left:1744px;top:954px" width="14" height="14" viewBox="0 0 14 14"><path d="M4 0.5 H10 L13.5 4 V10 L10 13.5 H4 L0.5 10 V4Z" fill="#b8b8b8"/><rect x="6" y="3" width="2" height="5" fill="#2c2c2c"/><rect x="6" y="9.3" width="2" height="2" fill="#2c2c2c"/></svg>
<svg style="left:1771px;top:954px" width="13" height="13" viewBox="0 0 13 13"><path d="M6.5 0.5 L8.3 4.6 L12.5 4.9 L9.3 7.7 L10.3 12 L6.5 9.7 L2.7 12 L3.7 7.7 L0.5 4.9 L4.7 4.6Z" fill="#8a8a8a"/></svg>
<svg style="left:1796px;top:956px" width="16" height="10" viewBox="0 0 16 10"><path d="M0.5 5 Q8 -2 15.5 5 Q8 12 0.5 5Z" fill="none" stroke="#6e6e6e" stroke-width="1.3"/><circle cx="8" cy="5" r="2.2" fill="#6e6e6e"/></svg>
<div class="t" style="left:1812px;top:953px;color:#b0b0b0;font-size:12px">22</div>
<div class="a" style="left:0;top:972px;width:194px;height:398px;background:#2b2b2b"></div>
<div class="a" style="left:194px;top:972px;width:13px;height:398px;background:#2a2a2a"></div>
<div class="a" style="left:194px;top:972px;width:1px;height:398px;background:#262626"></div>
<div class="a" style="left:208px;top:993px;width:1624px;height:377px;background:#282828"></div>
<div class="a" style="left:207px;top:972px;width:1px;height:398px;background:#1c1c1c"></div>
<svg style="left:196px;top:976px" width="9" height="7"><path d="M0.5 6 H8.5 L4.5 1Z" fill="#b8b8b8"/></svg>
<svg style="left:196px;top:1357px" width="9" height="7"><path d="M0.5 1 H8.5 L4.5 6Z" fill="#b8b8b8"/></svg>
<div class="a" style="left:197px;top:1017px;width:8px;height:169px;background:#4a4a4a;border-radius:4px"></div>
<div class="a" style="left:0;top:1228px;width:194px;height:16px;background:#3e3e3e"></div>
<svg style="left:4px;top:976px" width="10" height="9"><path d="M0.5 1 H9 L4.75 8Z" fill="#585858"/></svg>
<svg style="left:18px;top:974px" width="14" height="12" viewBox="0 0 14 12"><path d="M0.6 1 H5 L6.3 2.3 H11 V4.5 H3.4 L0.6 11Z" fill="none" stroke="#bcbcbc" stroke-width="1.1"/><path d="M3.4 4.8 H13.6 L11 11.2 H0.6Z" fill="#bcbcbc"/></svg>
<div class="t" style="left:35px;top:972px;font-weight:bold;color:#cfcfcf;letter-spacing:0.2px">Assets</div>
<svg style="left:18px;top:992px" width="10" height="9"><path d="M0.5 1 H9 L4.75 8Z" fill="#585858"/></svg>
<svg style="left:32px;top:990px" width="14" height="12" viewBox="0 0 14 12"><path d="M0.6 1 H5 L6.3 2.3 H11 V4.5 H3.4 L0.6 11Z" fill="none" stroke="#bcbcbc" stroke-width="1.1"/><path d="M3.4 4.8 H13.6 L11 11.2 H0.6Z" fill="#bcbcbc"/></svg>
<div class="t" style="left:49px;top:988px;color:#c4c4c4;letter-spacing:0.2px">Resources</div>
<svg style="left:32px;top:1008px" width="10" height="9"><path d="M0.5 1 H9 L4.75 8Z" fill="#585858"/></svg>
<svg style="left:46px;top:1006px" width="14" height="12" viewBox="0 0 14 12"><path d="M0.6 1 H5 L6.3 2.3 H11 V4.5 H3.4 L0.6 11Z" fill="none" stroke="#bcbcbc" stroke-width="1.1"/><path d="M3.4 4.8 H13.6 L11 11.2 H0.6Z" fill="#bcbcbc"/></svg>
<div class="t" style="left:63px;top:1004px;color:#c4c4c4;letter-spacing:0.2px">FBX</div>
<svg style="left:47px;top:1023px" width="9" height="10"><path d="M1 0.5 V9.5 L8 5Z" fill="#585858"/></svg>
<svg style="left:60px;top:1022px" width="14" height="12" viewBox="0 0 14 12"><path d="M0.5 1.5 H5 L6.5 3 H13.5 V11 H0.5Z" fill="#bcbcbc"/></svg>
<div class="t" style="left:77px;top:1020px;color:#c4c4c4;letter-spacing:0.2px">Aris</div>
<svg style="left:46px;top:1040px" width="10" height="9"><path d="M0.5 1 H9 L4.75 8Z" fill="#585858"/></svg>
<svg style="left:60px;top:1038px" width="14" height="12" viewBox="0 0 14 12"><path d="M0.6 1 H5 L6.3 2.3 H11 V4.5 H3.4 L0.6 11Z" fill="none" stroke="#bcbcbc" stroke-width="1.1"/><path d="M3.4 4.8 H13.6 L11 11.2 H0.6Z" fill="#bcbcbc"/></svg>
<div class="t" style="left:77px;top:1036px;color:#c4c4c4;letter-spacing:0.2px">Midori</div>
<svg style="left:74px;top:1054px" width="14" height="12" viewBox="0 0 14 12"><path d="M0.5 1.5 H5 L6.5 3 H13.5 V11 H0.5Z" fill="#bcbcbc"/></svg>
<div class="t" style="left:91px;top:1052px;color:#c4c4c4;letter-spacing:0.2px">Mats</div>
<svg style="left:46px;top:1072px" width="10" height="9"><path d="M0.5 1 H9 L4.75 8Z" fill="#585858"/></svg>
<svg style="left:60px;top:1070px" width="14" height="12" viewBox="0 0 14 12"><path d="M0.6 1 H5 L6.3 2.3 H11 V4.5 H3.4 L0.6 11Z" fill="none" stroke="#bcbcbc" stroke-width="1.1"/><path d="M3.4 4.8 H13.6 L11 11.2 H0.6Z" fill="#bcbcbc"/></svg>
<div class="t" style="left:77px;top:1068px;color:#c4c4c4;letter-spacing:0.2px">Momoi</div>
<svg style="left:74px;top:1086px" width="14" height="12" viewBox="0 0 14 12"><path d="M0.5 1.5 H5 L6.5 3 H13.5 V11 H0.5Z" fill="#bcbcbc"/></svg>
<div class="t" style="left:91px;top:1084px;color:#c4c4c4;letter-spacing:0.2px">Mats</div>
<svg style="left:46px;top:1104px" width="10" height="9"><path d="M0.5 1 H9 L4.75 8Z" fill="#585858"/></svg>
<svg style="left:60px;top:1102px" width="14" height="12" viewBox="0 0 14 12"><path d="M0.6 1 H5 L6.3 2.3 H11 V4.5 H3.4 L0.6 11Z" fill="none" stroke="#bcbcbc" stroke-width="1.1"/><path d="M3.4 4.8 H13.6 L11 11.2 H0.6Z" fill="#bcbcbc"/></svg>
<div class="t" style="left:77px;top:1100px;color:#c4c4c4;letter-spacing:0.2px">Yuzu</div>
<svg style="left:74px;top:1118px" width="14" height="12" viewBox="0 0 14 12"><path d="M0.5 1.5 H5 L6.5 3 H13.5 V11 H0.5Z" fill="#bcbcbc"/></svg>
<div class="t" style="left:91px;top:1116px;color:#c4c4c4;letter-spacing:0.2px">Mats</div>
<svg style="left:46px;top:1134px" width="14" height="12" viewBox="0 0 14 12"><path d="M0.5 1.5 H5 L6.5 3 H13.5 V11 H0.5Z" fill="#bcbcbc"/></svg>
<div class="t" style="left:63px;top:1132px;color:#c4c4c4;letter-spacing:0.2px">SimpleURPToon</div>
<svg style="left:18px;top:1152px" width="10" height="9"><path d="M0.5 1 H9 L4.75 8Z" fill="#585858"/></svg>
<svg style="left:32px;top:1150px" width="14" height="12" viewBox="0 0 14 12"><path d="M0.6 1 H5 L6.3 2.3 H11 V4.5 H3.4 L0.6 11Z" fill="none" stroke="#bcbcbc" stroke-width="1.1"/><path d="M3.4 4.8 H13.6 L11 11.2 H0.6Z" fill="#bcbcbc"/></svg>
<div class="t" style="left:49px;top:1148px;color:#c4c4c4;letter-spacing:0.2px">Samples</div>
<svg style="left:33px;top:1167px" width="9" height="10"><path d="M1 0.5 V9.5 L8 5Z" fill="#585858"/></svg>
<svg style="left:46px;top:1166px" width="14" height="12" viewBox="0 0 14 12"><path d="M0.5 1.5 H5 L6.5 3 H13.5 V11 H0.5Z" fill="#bcbcbc"/></svg>
<div class="t" style="left:63px;top:1164px;color:#c4c4c4;letter-spacing:0.2px">Cinemachine</div>
<svg style="left:32px;top:1184px" width="10" height="9"><path d="M0.5 1 H9 L4.75 8Z" fill="#585858"/></svg>
<svg style="left:46px;top:1182px" width="14" height="12" viewBox="0 0 14 12"><path d="M0.6 1 H5 L6.3 2.3 H11 V4.5 H3.4 L0.6 11Z" fill="none" stroke="#bcbcbc" stroke-width="1.1"/><path d="M3.4 4.8 H13.6 L11 11.2 H0.6Z" fill="#bcbcbc"/></svg>
<div class="t" style="left:63px;top:1180px;color:#c4c4c4;letter-spacing:0.2px">Input System</div>
<svg style="left:46px;top:1200px" width="10" height="9"><path d="M0.5 1 H9 L4.75 8Z" fill="#585858"/></svg>
<svg style="left:60px;top:1198px" width="14" height="12" viewBox="0 0 14 12"><path d="M0.6 1 H5 L6.3 2.3 H11 V4.5 H3.4 L0.6 11Z" fill="none" stroke="#bcbcbc" stroke-width="1.1"/><path d="M3.4 4.8 H13.6 L11 11.2 H0.6Z" fill="#bcbcbc"/></svg>
<div class="t" style="left:77px;top:1196px;color:#c4c4c4;letter-spacing:0.2px">1.14.2</div>
<svg style="left:74px;top:1214px" width="14" height="12" viewBox="0 0 14 12"><path d="M0.5 1.5 H5 L6.5 3 H13.5 V11 H0.5Z" fill="#bcbcbc"/></svg>
<div class="t" style="left:91px;top:1212px;color:#c4c4c4;letter-spacing:0.2px">On-Screen Contro</div>
<svg style="left:32px;top:1230px" width="14" height="12" viewBox="0 0 14 12"><path d="M0.5 1.5 H5 L6.5 3 H13.5 V11 H0.5Z" fill="#bcbcbc"/></svg>
<div class="t" style="left:49px;top:1228px;color:#c4c4c4;letter-spacing:0.2px">Scenes</div>
<svg style="left:18px;top:1248px" width="10" height="9"><path d="M0.5 1 H9 L4.75 8Z" fill="#585858"/></svg>
<svg style="left:32px;top:1246px" width="14" height="12" viewBox="0 0 14 12"><path d="M0.6 1 H5 L6.3 2.3 H11 V4.5 H3.4 L0.6 11Z" fill="none" stroke="#bcbcbc" stroke-width="1.1"/><path d="M3.4 4.8 H13.6 L11 11.2 H0.6Z" fill="#bcbcbc"/></svg>
<div class="t" style="left:49px;top:1244px;color:#c4c4c4;letter-spacing:0.2px">Scripts</div>
<svg style="left:46px;top:1262px" width="14" height="12" viewBox="0 0 14 12"><path d="M0.5 1.5 H5 L6.5 3 H13.5 V11 H0.5Z" fill="#bcbcbc"/></svg>
<div class="t" style="left:63px;top:1260px;color:#c4c4c4;letter-spacing:0.2px">StudyCase1</div>
<svg style="left:46px;top:1278px" width="14" height="12" viewBox="0 0 14 12"><path d="M0.5 1.5 H5 L6.5 3 H13.5 V11 H0.5Z" fill="#bcbcbc"/></svg>
<div class="t" style="left:63px;top:1276px;color:#c4c4c4;letter-spacing:0.2px">StudyCase2</div>
<svg style="left:46px;top:1294px" width="14" height="12" viewBox="0 0 14 12"><path d="M0.5 1.5 H5 L6.5 3 H13.5 V11 H0.5Z" fill="#bcbcbc"/></svg>
<div class="t" style="left:63px;top:1292px;color:#c4c4c4;letter-spacing:0.2px">StudyCase3</div>
<svg style="left:46px;top:1310px" width="14" height="12" viewBox="0 0 14 12"><path d="M0.5 1.5 H5 L6.5 3 H13.5 V11 H0.5Z" fill="#bcbcbc"/></svg>
<div class="t" style="left:63px;top:1308px;color:#c4c4c4;letter-spacing:0.2px">Test</div>
<svg style="left:32px;top:1326px" width="14" height="12" viewBox="0 0 14 12"><path d="M0.5 1.5 H5 L6.5 3 H13.5 V11 H0.5Z" fill="#bcbcbc"/></svg>
<div class="t" style="left:49px;top:1324px;color:#c4c4c4;letter-spacing:0.2px">Settings</div>
<svg style="left:18px;top:1344px" width="10" height="9"><path d="M0.5 1 H9 L4.75 8Z" fill="#585858"/></svg>
<svg style="left:32px;top:1342px" width="14" height="12" viewBox="0 0 14 12"><path d="M0.6 1 H5 L6.3 2.3 H11 V4.5 H3.4 L0.6 11Z" fill="none" stroke="#bcbcbc" stroke-width="1.1"/><path d="M3.4 4.8 H13.6 L11 11.2 H0.6Z" fill="#bcbcbc"/></svg>
<div class="t" style="left:49px;top:1340px;color:#c4c4c4;letter-spacing:0.2px">ThirdParty</div>
<svg style="left:32px;top:1360px" width="10" height="9"><path d="M0.5 1 H9 L4.75 8Z" fill="#585858"/></svg>
<svg style="left:46px;top:1358px" width="14" height="12" viewBox="0 0 14 12"><path d="M0.6 1 H5 L6.3 2.3 H11 V4.5 H3.4 L0.6 11Z" fill="none" stroke="#bcbcbc" stroke-width="1.1"/><path d="M3.4 4.8 H13.6 L11 11.2 H0.6Z" fill="#bcbcbc"/></svg>
<div class="t" style="left:63px;top:1356px;color:#c4c4c4;letter-spacing:0.2px">BOXOPHOBIC</div>
<div class="a" style="left:208px;top:972px;width:1624px;height:20px;background:#2e2e2e"></div>
<div class="a" style="left:208px;top:992px;width:1624px;height:1px;background:#262626"></div>
<div class="t" style="left:212px;top:974px;color:#a8a8a8;letter-spacing:0.2px">Assets</div>
<svg style="left:255px;top:978px" width="6" height="9"><path d="M1 0.5 L5 4.5 L1 8.5" fill="none" stroke="#8a8a8a" stroke-width="1.1"/></svg>
<div class="t" style="left:266px;top:974px;color:#c8c8c8;font-weight:bold;letter-spacing:0.2px">Scenes</div>
<svg style="left:225px;top:994px" width="13" height="14" viewBox="0 0 13 14"><path d="M6.5 0.5 L12.3 3.8 V10.2 L6.5 13.5 L0.7 10.2 V3.8Z" fill="#cfcfcf"/><path d="M2.4 5.6 L5.8 7.5 V11.2 L2.4 9.3Z M10.6 5.6 L7.2 7.5 V11.2 L10.6 9.3Z" fill="#282828"/><rect x="5.9" y="0" width="1.2" height="4.2" fill="#282828"/></svg>
<div class="t" style="left:242px;top:994px;color:#c4c4c4;letter-spacing:0.2px">StudyCase1</div>
<svg style="left:225px;top:1010px" width="13" height="14" viewBox="0 0 13 14"><path d="M6.5 0.5 L12.3 3.8 V10.2 L6.5 13.5 L0.7 10.2 V3.8Z" fill="#cfcfcf"/><path d="M2.4 5.6 L5.8 7.5 V11.2 L2.4 9.3Z M10.6 5.6 L7.2 7.5 V11.2 L10.6 9.3Z" fill="#282828"/><rect x="5.9" y="0" width="1.2" height="4.2" fill="#282828"/></svg>
<div class="t" style="left:242px;top:1010px;color:#c4c4c4;letter-spacing:0.2px">StudyCase2</div>
<svg style="left:225px;top:1026px" width="13" height="14" viewBox="0 0 13 14"><path d="M6.5 0.5 L12.3 3.8 V10.2 L6.5 13.5 L0.7 10.2 V3.8Z" fill="#cfcfcf"/><path d="M2.4 5.6 L5.8 7.5 V11.2 L2.4 9.3Z M10.6 5.6 L7.2 7.5 V11.2 L10.6 9.3Z" fill="#282828"/><rect x="5.9" y="0" width="1.2" height="4.2" fill="#282828"/></svg>
<div class="t" style="left:242px;top:1026px;color:#c4c4c4;letter-spacing:0.2px">StudyCase3</div>
<svg style="left:225px;top:1042px" width="13" height="14" viewBox="0 0 13 14"><path d="M6.5 0.5 L12.3 3.8 V10.2 L6.5 13.5 L0.7 10.2 V3.8Z" fill="#cfcfcf"/><path d="M2.4 5.6 L5.8 7.5 V11.2 L2.4 9.3Z M10.6 5.6 L7.2 7.5 V11.2 L10.6 9.3Z" fill="#282828"/><rect x="5.9" y="0" width="1.2" height="4.2" fill="#282828"/></svg>
<div class="t" style="left:242px;top:1042px;color:#c4c4c4;letter-spacing:0.2px">Test</div>
<div class="a" style="left:208px;top:1349px;width:1624px;height:21px;background:#333333"></div>
<div class="a" style="left:1766px;top:1359px;width:50px;height:2px;background:#555555"></div>
<div class="a" style="left:1761px;top:1355px;width:10px;height:10px;background:#9a9a9a;border-radius:5px"></div>
<div class="a" style="left:1832px;top:932px;width:2px;height:438px;background:#191919"></div>
<div class="a" style="left:0;top:1370px;width:2560px;height:22px;background:#141414"></div>
<div class="a" style="left:2454px;top:1372px;width:1px;height:20px;background:#1f1f1f"></div>
<div class="a" style="left:2480px;top:1372px;width:1px;height:20px;background:#1f1f1f"></div>
<div class="a" style="left:2507px;top:1372px;width:1px;height:20px;background:#1f1f1f"></div>
<div class="a" style="left:2533px;top:1372px;width:1px;height:20px;background:#1f1f1f"></div>
<svg style="left:2459px;top:1375px" width="16" height="15" viewBox="0 0 16 15"><path d="M5 2 L6 4 H10 L11 2 M4 7 L1 6 M12 7 L15 6 M4 10 L1 12 M12 10 L15 12" stroke="#b0b0b0" stroke-width="1.2" fill="none"/><ellipse cx="8" cy="9" rx="4.5" ry="5.5" fill="#b0b0b0"/><path d="M1 1 L15 14.5" stroke="#141414" stroke-width="1.8"/><path d="M1 0.5 L15 14" stroke="#b0b0b0" stroke-width="0.8"/></svg>
<svg style="left:2486px;top:1375px" width="15" height="15" viewBox="0 0 15 15"><ellipse cx="7" cy="3.5" rx="6" ry="3" fill="#b0b0b0"/><path d="M1 6.5 Q7 10 13 6.5 V8.5 Q7 12 1 8.5Z M1 10.5 Q7 14 13 10.5 V11.5 Q7 15 1 11.5Z" fill="#b0b0b0"/><path d="M1 1 L14 14.5" stroke="#141414" stroke-width="1.8"/><path d="M1 0.5 L14 14" stroke="#b0b0b0" stroke-width="0.8"/></svg>
<svg style="left:2512px;top:1375px" width="16" height="15" viewBox="0 0 16 15"><path d="M3 4 A6 6 0 0 1 13 4 M13 11 A6 6 0 0 1 3 11" fill="none" stroke="#b0b0b0" stroke-width="1.4"/><circle cx="8" cy="7.5" r="3" fill="#b0b0b0"/><path d="M1 1 L15 14.5" stroke="#141414" stroke-width="1.8"/><path d="M1 0.5 L15 14" stroke="#b0b0b0" stroke-width="0.8"/></svg>
<svg style="left:2539px;top:1375px" width="15" height="15" viewBox="0 0 15 15"><circle cx="7.5" cy="7.5" r="6.5" fill="none" stroke="#b0b0b0" stroke-width="1.1"/><path d="M4.3 7.5 L6.7 9.8 L10.7 5.5" fill="none" stroke="#b0b0b0" stroke-width="1.3"/></svg>
<!-- scene tools overlay -->
<div class="a" style="left:456px;top:120px;width:38px;height:147px;background:#131313;border-radius:4px"></div>
<div class="a" style="left:467px;top:126px;width:16px;height:1px;background:#8a8a8a"></div>
<div class="a" style="left:467px;top:129px;width:16px;height:1px;background:#8a8a8a"></div>
<div class="a" style="left:459px;top:138px;width:32px;height:20px;background:#454545;border-radius:3px 3px 0 0"></div>
<div class="a" style="left:459px;top:159px;width:32px;height:20px;background:#395575"></div>
<div class="a" style="left:459px;top:180px;width:32px;height:20px;background:#454545"></div>
<div class="a" style="left:459px;top:201px;width:32px;height:20px;background:#454545"></div>
<div class="a" style="left:459px;top:222px;width:32px;height:20px;background:#454545"></div>
<div class="a" style="left:459px;top:243px;width:32px;height:20px;background:#454545;border-radius:0 0 3px 3px"></div>
<svg style="left:467px;top:139px" width="16" height="17" viewBox="0 0 16 17"><path d="M4 16 Q1 12 1.5 8 Q2 6.5 3.2 8 L4.5 10 V3 Q5 1.6 6 3 V8 V1.8 Q7 0.4 8 1.8 V8 V2.4 Q9 1 10 2.4 V8.5 V4 Q11 2.8 12 4 V11 Q12 15 10 16Z" fill="#c4c4c4"/></svg>
<svg style="left:467px;top:160px" width="16" height="16" viewBox="0 0 16 16"><path d="M8 1 V15 M1 8 H15" stroke="#c9d4e0" stroke-width="1.2"/><path d="M5.5 3.5 L8 1 L10.5 3.5 M5.5 12.5 L8 15 L10.5 12.5 M3.5 5.5 L1 8 L3.5 10.5 M12.5 5.5 L15 8 L12.5 10.5" fill="none" stroke="#c9d4e0" stroke-width="1.3"/></svg>
<svg style="left:467px;top:182px" width="16" height="16" viewBox="0 0 16 16"><path d="M8.5 2 A6 6 0 0 0 4 13" fill="none" stroke="#bdbdbd" stroke-width="1.1"/><path d="M2 11.5 L4 13.3 L6.8 13" fill="none" stroke="#bdbdbd" stroke-width="1.1"/><path d="M7.5 14 A6 6 0 0 0 12 3" fill="none" stroke="#bdbdbd" stroke-width="1.1"/><path d="M14 4.5 L12 2.7 L9.2 3" fill="none" stroke="#bdbdbd" stroke-width="1.1"/></svg>
<svg style="left:468px;top:203px" width="15" height="15" viewBox="0 0 15 15"><rect x="1" y="1" width="13" height="13" fill="none" stroke="#b8b8b8" stroke-width="1.1"/><rect x="1" y="8" width="6" height="6" fill="none" stroke="#b8b8b8" stroke-width="1.1"/><path d="M6 9 L11.5 3.5 M8 3.5 H11.5 V7" fill="none" stroke="#b8b8b8" stroke-width="1.1"/></svg>
<svg style="left:468px;top:224px" width="15" height="15" viewBox="0 0 15 15"><path d="M3 2 H12 M3 13 H12 M2 3 V12 M13 3 V12" stroke="#b8b8b8" stroke-width="1" stroke-dasharray="2 1.5"/><rect x="0.5" y="0.5" width="3" height="3" fill="#b8b8b8"/><rect x="11.5" y="0.5" width="3" height="3" fill="#b8b8b8"/><rect x="0.5" y="11.5" width="3" height="3" fill="#b8b8b8"/><rect x="11.5" y="11.5" width="3" height="3" fill="#b8b8b8"/></svg>
<svg style="left:467px;top:245px" width="16" height="16" viewBox="0 0 16 16"><circle cx="8" cy="8" r="6" fill="none" stroke="#b8b8b8" stroke-width="1.1" stroke-dasharray="3 1.5"/><path d="M8 3 V13 M3 8 H13" stroke="#b8b8b8" stroke-width="1.1"/><path d="M6.5 4.5 L8 3 L9.5 4.5 M6.5 11.5 L8 13 L9.5 11.5 M4.5 6.5 L3 8 L4.5 9.5 M11.5 6.5 L13 8 L11.5 9.5" fill="none" stroke="#b8b8b8" stroke-width="1"/><path d="M1 15 L3.5 12.5 L1 12.5Z" fill="#b8b8b8"/></svg>
<!-- gizmo -->
<div class="a" style="left:1730px;top:126px;width:14px;height:1px;background:#4a4743"></div>
<div class="a" style="left:1730px;top:129px;width:14px;height:1px;background:#4a4743"></div>
<svg style="left:1740px;top:125px;will-change:transform" width="80" height="80" viewBox="1740 125 80 80"><path d="M1771.0 177.0 L1753.8 183.0 L1762.2 193.0Z" fill="#c9c9c9"/><ellipse cx="1758.0" cy="188.0" rx="6.5" ry="2.9" transform="rotate(-130.2 1758.0 188.0)" fill="#dedede"/><path d="M1784.0 175.0 L1800.7 188.2 L1805.3 173.8Z" fill="#bdbdbd"/><ellipse cx="1803.0" cy="181.0" rx="7.5" ry="3.0" transform="rotate(107.5 1803.0 181.0)" fill="#d0d0d0"/><path d="M1777.0 177.0 L1772.0 189.0 L1782.0 189.0Z" fill="#d2d2d2"/><ellipse cx="1777.0" cy="189.0" rx="5.0" ry="2.0" transform="rotate(180.0 1777.0 189.0)" fill="#dcdcdc"/><path d="M1768 164.5 L1777 159.5 L1786 164.5 L1786 175 L1777 180 L1768 175Z" fill="#d8d8d8"/><path d="M1777 169.5 L1786 164.5 L1786 175 L1777 180Z" fill="#b9b9b9"/><path d="M1768 164.5 L1777 159.5 L1786 164.5 L1777 169.5Z" fill="#e2e2e2"/><path d="M1777.0 162.0 L1784.8 143.8 L1769.2 143.8Z" fill="#6cc04c"/><ellipse cx="1777.0" cy="143.8" rx="7.8" ry="2.6" transform="rotate(0.0 1777.0 143.8)" fill="#8edc5e"/><path d="M1783.5 164.0 L1795.1 161.1 L1789.9 153.9Z" fill="#d9553a"/><ellipse cx="1792.5" cy="157.5" rx="4.5" ry="2.2" transform="rotate(54.2 1792.5 157.5)" fill="#e86a48"/><path d="M1769.0 166.0 L1757.9 155.9 L1754.1 164.1Z" fill="#3f7ae0"/><ellipse cx="1756.0" cy="160.0" rx="4.5" ry="2.2" transform="rotate(-65.2 1756.0 160.0)" fill="#5a94f0"/><text x="1775" y="139" font-family="Liberation Sans" font-size="11" fill="#e8e8e8" text-anchor="middle">y</text><text x="1795.5" y="156.5" font-family="Liberation Sans" font-size="11" fill="#e8e8e8" text-anchor="middle">x</text><text x="1749.5" y="163" font-family="Liberation Sans" font-size="11" fill="#e8e8e8" text-anchor="middle">z</text><rect x="1806" y="138.5" width="7" height="5" fill="#d8d8d8"/><path d="M1807.5 138.5 V136.5 Q1809.5 134 1811.5 136.5" fill="none" stroke="#d8d8d8" stroke-width="1.1"/></svg>
<svg style="left:1751px;top:214px" width="12" height="12" viewBox="0 0 12 12"><path d="M11 1.5 L1.5 6 L11 10.5 M1.5 6 H11" fill="none" stroke="#d0d0d0" stroke-width="1"/></svg>
<div class="t" style="left:1765px;top:213px;color:#d2d2d2;font-size:12.5px">Persp</div>
<!-- selection rects -->
<div class="a" style="left:517px;top:246px;width:600px;height:361px;border:4px solid #0099ff;border-radius:4px;box-sizing:border-box"></div>
<!-- IME floating bar -->
<div class="a" style="left:1785px;top:1317px;width:137px;height:24px;background:#050505;border:1.5px solid #f0f0f0;border-radius:4px;box-sizing:border-box;box-shadow:0 2px 4px rgba(0,0,0,0.5)"></div>
<svg style="left:1785px;top:1268px" width="180" height="74" viewBox="1785 1268 180 74">
 <path d="M1794 1327 H1805 V1334 H1794Z M1799.5 1323 V1339" fill="none" stroke="#ffffff" stroke-width="2"/>
 <path d="M1820 1323 Q1828 1329 1822 1336 Q1818 1339 1813.5 1336 Q1821 1336 1822 1330 Q1822.5 1326 1820 1323Z" fill="#f0f0f0"/>
 <circle cx="1836" cy="1327" r="1.7" fill="none" stroke="#fff" stroke-width="1"/>
 <path d="M1842 1333 L1840 1337" stroke="#fff" stroke-width="1.8"/>
 <path d="M1855 1324 L1857 1326 M1855 1329 H1860 M1857 1326 V1338 L1860 1335 M1862 1324 H1870 M1866 1322 V1334 M1862 1328 H1871 M1862 1331 H1870 M1861 1335 Q1864 1339 1871 1339 M1862 1326 L1861 1336" fill="none" stroke="#fff" stroke-width="1.6"/>
 <path d="M1882 1341 L1884 1325 Q1890 1319 1902 1321 L1920 1323 L1920 1340Z" fill="#10141c"/>
 <path d="M1884 1340 L1890 1330 Q1897 1331 1901 1340Z" fill="#e8cdb8"/>
 <path d="M1904 1340 L1908 1331 Q1914 1331 1917 1340Z" fill="#e0c4b0"/>
 <ellipse cx="1894" cy="1331" rx="3" ry="2.3" fill="#3a8ee8"/>
 <path d="M1903 1333 Q1900 1322 1912 1318 Q1922 1312 1918 1307 Q1914 1303 1928 1298 Q1945 1291 1960 1275 Q1950 1292 1934 1300 Q1925 1305 1930 1309 Q1932 1314 1921 1318 Q1914 1322 1916 1333Z" fill="#1c86e0"/>
 <path d="M1906 1322 Q1912 1315 1915 1305" stroke="#1aa8e8" stroke-width="1.2" fill="none"/>
 <path d="M1920 1316 Q1935 1314 1952 1307" stroke="#1a70c8" stroke-width="1" fill="none"/>
 <ellipse cx="1912" cy="1331" rx="4" ry="3.2" fill="#38b0f0"/>
</svg>
</body></html>
